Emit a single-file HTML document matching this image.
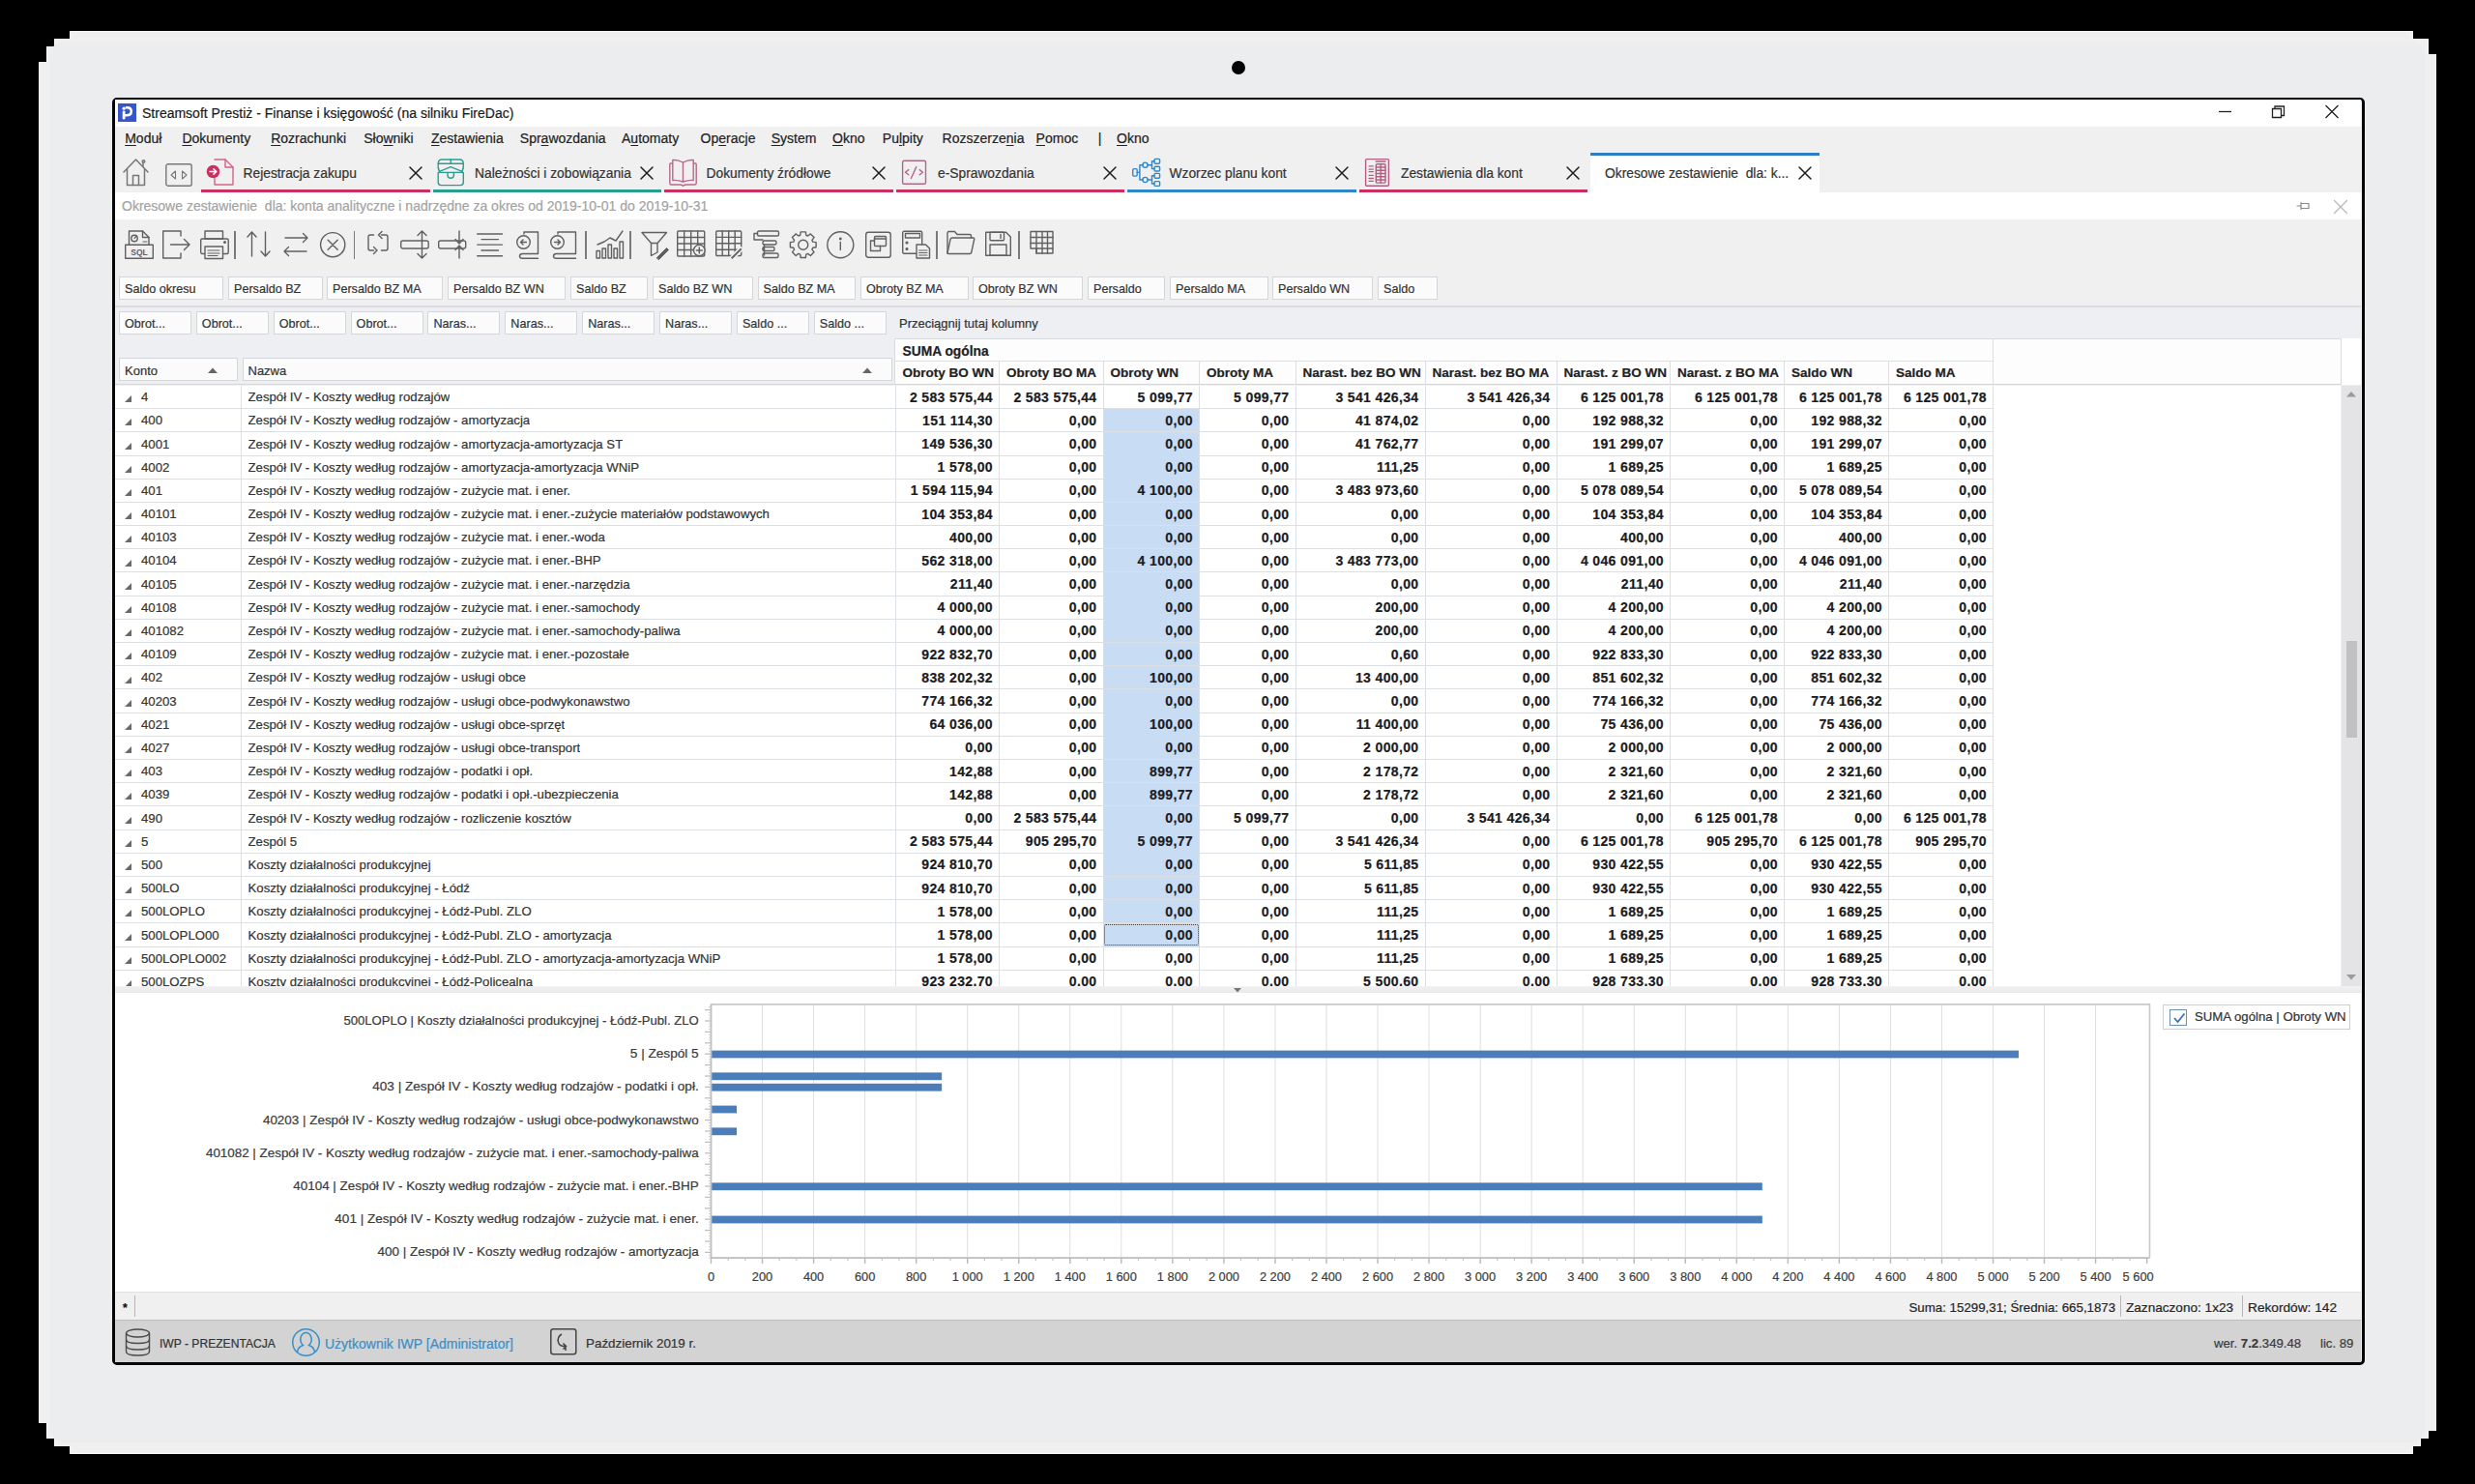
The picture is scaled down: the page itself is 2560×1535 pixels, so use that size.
<!DOCTYPE html>
<html><head><meta charset="utf-8"><style>
*{margin:0;padding:0;box-sizing:border-box}
html,body{width:2560px;height:1535px;overflow:hidden;background:#000}
body{font-family:"Liberation Sans",sans-serif;color:#2b2b2b;position:relative;-webkit-text-stroke:0.2px currentColor}
.a{position:absolute}
.t{position:absolute;white-space:nowrap;line-height:1}
svg{position:absolute;overflow:visible}
.u{text-decoration:underline;text-underline-offset:2px;text-decoration-thickness:1px}
.gb{position:absolute;background:#fbfbfc;border:1px solid #d3d6da;height:24px;font-size:12.6px;color:#333;padding-left:5px;line-height:24px;white-space:nowrap;overflow:hidden}
.row{position:absolute;left:119px;width:1942px;height:24.19px;border-bottom:1px solid #dcdfe4}
.c{position:absolute;top:-0.4px;height:23.6px;line-height:24.6px;white-space:nowrap;overflow:hidden}
.n{font-weight:bold;font-size:14px;letter-spacing:0.36px;text-align:right;color:#1b1b22}
.vl{position:absolute;width:1px;background:#dcdfe4}
.hd{position:absolute;font-weight:bold;font-size:13.5px;color:#222;line-height:24px;white-space:nowrap;padding-left:6px}
</style></head><body>
<div class="a" style="left:72px;top:32px;width:2424px;height:8px;background:#fcfcfc"></div>
<div class="a" style="left:56px;top:40px;width:2456px;height:8px;background:#fcfcfc"></div>
<div class="a" style="left:48px;top:48px;width:2464px;height:8px;background:#fcfcfc"></div>
<div class="a" style="left:48px;top:56px;width:2472px;height:8px;background:#fcfcfc"></div>
<div class="a" style="left:40px;top:64px;width:2480px;height:1408px;background:#fcfcfc"></div>
<div class="a" style="left:48px;top:1472px;width:2472px;height:8px;background:#fcfcfc"></div>
<div class="a" style="left:48px;top:1480px;width:2464px;height:8px;background:#fcfcfc"></div>
<div class="a" style="left:56px;top:1488px;width:2448px;height:8px;background:#fcfcfc"></div>
<div class="a" style="left:72px;top:1496px;width:2424px;height:8px;background:#fcfcfc"></div>
<div class="a" style="left:73px;top:33px;width:2422px;height:7px;background:#f0f0f1"></div>
<div class="a" style="left:57px;top:40px;width:2454px;height:8px;background:#f0f0f1"></div>
<div class="a" style="left:49px;top:48px;width:2462px;height:8px;background:#f0f0f1"></div>
<div class="a" style="left:49px;top:56px;width:2470px;height:8px;background:#f0f0f1"></div>
<div class="a" style="left:41px;top:64px;width:2478px;height:1408px;background:#f0f0f1"></div>
<div class="a" style="left:49px;top:1472px;width:2470px;height:8px;background:#f0f0f1"></div>
<div class="a" style="left:49px;top:1480px;width:2462px;height:8px;background:#f0f0f1"></div>
<div class="a" style="left:57px;top:1488px;width:2446px;height:8px;background:#f0f0f1"></div>
<div class="a" style="left:73px;top:1496px;width:2422px;height:7px;background:#f0f0f1"></div>
<div class="a" style="left:52px;top:43px;width:2456px;height:1449px;background:#ecedef;border-radius:14px"></div>
<div class="a" style="left:1273.8px;top:62.8px;width:14.4px;height:14.4px;background:#000;border-radius:50%"></div>
<div class="a" style="left:116px;top:101px;width:2330px;height:1311px;border:3px solid #050505;border-top-width:2px;border-radius:5px;background:#f0f0f0"></div>
<div class="a" style="left:119px;top:103px;width:2323px;height:28px;background:#fff"></div>
<div class="a" style="left:122px;top:107px;width:19px;height:19px;background:#3657c9"></div>
<svg style="left:122px;top:107px" width="19" height="19"><circle cx="6.1" cy="5.2" r="1.6" fill="#fff"/><path d="M6.1 8.8 V15.2" stroke="#fff" stroke-width="2.8" stroke-linecap="round"/><path d="M8.8 4.3 Q13.7 4 13.8 8.2 Q13.7 12.3 8.8 12.2 H6.5" stroke="#fff" stroke-width="2.6" fill="none" stroke-linecap="round"/></svg>
<div class="t" style="left:147px;top:110px;font-size:14px;color:#1a1a1a">Streamsoft Prestiż - Finanse i księgowość (na silniku FireDac)</div>
<svg style="left:2290px;top:105px" width="150" height="24"><path d="M5 10.5 H18" stroke="#222" stroke-width="1.3"/><path d="M60.5 7.5 h9 v9 h-9 z M63 7.5 v-2.5 h9.5 v9.5 h-2.5" stroke="#222" stroke-width="1.3" fill="none"/><path d="M115.5 4 L128.5 17 M128.5 4 L115.5 17" stroke="#222" stroke-width="1.3"/></svg>
<div class="t" style="left:129.2px;top:136px;font-size:14px;color:#222"><span class="u">M</span>oduł</div>
<div class="t" style="left:188.4px;top:136px;font-size:14px;color:#222"><span class="u">D</span>okumenty</div>
<div class="t" style="left:280.2px;top:136px;font-size:14px;color:#222"><span class="u">R</span>ozrachunki</div>
<div class="t" style="left:376.2px;top:136px;font-size:14px;color:#222">Sło<span class="u">w</span>niki</div>
<div class="t" style="left:446px;top:136px;font-size:14px;color:#222"><span class="u">Z</span>estawienia</div>
<div class="t" style="left:537.8px;top:136px;font-size:14px;color:#222">Spr<span class="u">a</span>wozdania</div>
<div class="t" style="left:643px;top:136px;font-size:14px;color:#222">A<span class="u">u</span>tomaty</div>
<div class="t" style="left:724.6px;top:136px;font-size:14px;color:#222">Op<span class="u">e</span>racje</div>
<div class="t" style="left:797.7px;top:136px;font-size:14px;color:#222"><span class="u">S</span>ystem</div>
<div class="t" style="left:861px;top:136px;font-size:14px;color:#222"><span class="u">O</span>kno</div>
<div class="t" style="left:912.8px;top:136px;font-size:14px;color:#222">Pu<span class="u">l</span>pity</div>
<div class="t" style="left:974.6px;top:136px;font-size:14px;color:#222">Rozszerze<span class="u">n</span>ia</div>
<div class="t" style="left:1071.6px;top:136px;font-size:14px;color:#222"><span class="u">P</span>omoc</div>
<div class="t" style="left:1135.7px;top:136px;font-size:14px;color:#222">|</div>
<div class="t" style="left:1155px;top:136px;font-size:14px;color:#222"><span class="u">O</span>kno</div>
<svg style="left:126px;top:163px" width="30" height="30" viewBox="0 0 30 30"><g fill="none" stroke="#777" stroke-width="1.5" stroke-linecap="round" stroke-linejoin="round"><path d="M2 15 L14.5 2 L27 15"/><path d="M5.5 12 V28.5 H23.5 V12"/><path d="M11.5 28.5 V18.5 H17.5 V28.5"/><path d="M22 5 v4"/><circle cx="22.5" cy="4" r="1.3"/></g></svg>
<svg style="left:171px;top:169px" width="28" height="24" viewBox="0 0 28 24"><g fill="none" stroke="#777" stroke-width="1.4" stroke-linecap="round" stroke-linejoin="round"><rect x="0.8" y="0.8" width="26.4" height="22.4" rx="2"/><path d="M10.5 8 L6 12 L10.5 16 Z M17.5 8 L22 12 L17.5 16 Z" stroke-width="1.1"/></g></svg>
<svg style="left:212.5px;top:164px" width="29" height="29" viewBox="0 0 29 29"><g fill="none" stroke="#d2648a" stroke-width="1.4" stroke-linecap="round" stroke-linejoin="round"><path d="M9 1 H20 L28 9 V27 H9 V20.5"/><path d="M20 1 V9 H28"/><circle cx="7.5" cy="13.5" r="6.8" fill="#c9305f" stroke="none"/><path d="M4 13.5 H10.5 M8 10.8 L10.8 13.5 L8 16.2" stroke="#fff" stroke-width="1.6"/></g></svg>
<div class="t" style="left:251.5px;top:172.5px;font-size:13.8px;color:#333">Rejestracja zakupu</div>
<svg style="left:422.5px;top:172px" width="14" height="14" viewBox="0 0 14 14"><g fill="none" stroke="#1e1e1e" stroke-width="1.5" stroke-linecap="round" stroke-linejoin="round"><path d="M1 1 L13 13 M13 1 L1 13"/></g></svg>
<div class="a" style="left:208.0px;top:196.3px;width:236.5px;height:2.7px;background:#c9305f"></div>
<svg style="left:452.0px;top:164px" width="29" height="29" viewBox="0 0 29 29"><g fill="none" stroke="#2a9d91" stroke-width="1.4" stroke-linecap="round" stroke-linejoin="round"><path d="M2.5 13.4 Q0.6 9.5 1.2 5 Q1.6 1 5 1 H23.5 Q27 1 27.3 5 Q27.8 9.5 26 13.4"/><path d="M1.2 5.2 H27.3"/><path d="M14.2 1 V5.2"/><path d="M2.5 13.4 L14.2 8.6 L26 13.4"/><path d="M1.2 14.4 V24.5 Q1.2 27.6 4.3 27.6 H24.2 Q27.3 27.6 27.3 24.5 V14.4 Z"/><path d="M11 14.4 V17.3 Q11 20.3 14.2 20.3 Q17.4 20.3 17.4 17.3 V14.4"/></g></svg>
<div class="t" style="left:491.0px;top:172.5px;font-size:13.8px;color:#333">Należności i zobowiązania</div>
<svg style="left:662.0px;top:172px" width="14" height="14" viewBox="0 0 14 14"><g fill="none" stroke="#1e1e1e" stroke-width="1.5" stroke-linecap="round" stroke-linejoin="round"><path d="M1 1 L13 13 M13 1 L1 13"/></g></svg>
<div class="a" style="left:447.5px;top:196.3px;width:236.5px;height:2.7px;background:#2a9d91"></div>
<svg style="left:691.5px;top:164px" width="29" height="29" viewBox="0 0 29 29"><g fill="none" stroke="#b9688a" stroke-width="1.4" stroke-linecap="round" stroke-linejoin="round"><path d="M3.5 5 H1.5 Q0.8 5 0.8 6 V25.5 Q0.8 27 2.5 27 H11 Q13 27 14.5 28.3 Q16 27 18 27 H26.5 Q28.2 27 28.2 25.5 V6 Q28.2 5 27.5 5 H25.5"/><path d="M3.8 1.5 Q9 1 14.5 4 Q20 1 25.2 1.5 V22.5 Q20 22 14.5 24 Q9 22 3.8 22.5 Z"/><path d="M14.5 4 V24"/></g></svg>
<div class="t" style="left:730.5px;top:172.5px;font-size:13.8px;color:#333">Dokumenty źródłowe</div>
<svg style="left:901.5px;top:172px" width="14" height="14" viewBox="0 0 14 14"><g fill="none" stroke="#1e1e1e" stroke-width="1.5" stroke-linecap="round" stroke-linejoin="round"><path d="M1 1 L13 13 M13 1 L1 13"/></g></svg>
<div class="a" style="left:687.0px;top:196.3px;width:236.5px;height:2.7px;background:#c9305f"></div>
<svg style="left:931.0px;top:164px" width="29" height="29" viewBox="0 0 29 29"><g fill="none" stroke="#ad6a87" stroke-width="1.4" stroke-linecap="round" stroke-linejoin="round"><rect x="2.6" y="2.3" width="23.9" height="23.9" rx="1.5"/><path d="M8.8 11.6 L5.4 14.2 L8.8 16.8 M20.2 11.6 L23.5 14.2 L20.2 16.8 M16.8 8.6 L11.4 20.5"/></g></svg>
<div class="t" style="left:970.0px;top:172.5px;font-size:13.8px;color:#333">e-Sprawozdania</div>
<svg style="left:1141.0px;top:172px" width="14" height="14" viewBox="0 0 14 14"><g fill="none" stroke="#1e1e1e" stroke-width="1.5" stroke-linecap="round" stroke-linejoin="round"><path d="M1 1 L13 13 M13 1 L1 13"/></g></svg>
<div class="a" style="left:926.5px;top:196.3px;width:236.5px;height:2.7px;background:#c9305f"></div>
<svg style="left:1170.5px;top:164px" width="29" height="29" viewBox="0 0 29 29"><g fill="none" stroke="#2f86c8" stroke-width="1.4" stroke-linecap="round" stroke-linejoin="round"><rect x="0.7" y="10.6" width="4.5" height="7.5" rx="1.3"/><path d="M5.2 14.4 H7.9 M7.9 6.7 V22 M7.9 6.7 H10.9 M7.9 22 H10.9"/><circle cx="13.5" cy="6.7" r="2.6"/><circle cx="13.5" cy="22" r="2.6"/><path d="M16.1 6.7 H20.5 V2.8 H23 M20.5 6.7 V10.6 H23 M16.1 22 H20.5 V17.8 H23 M20.5 22 V26 H23"/><rect x="23" y="0.4" width="5.6" height="4.8" rx="1.2"/><rect x="23" y="8.2" width="5.6" height="4.8" rx="1.2"/><rect x="23" y="15.4" width="5.6" height="4.8" rx="1.2"/><rect x="23" y="23.6" width="5.6" height="4.8" rx="1.2"/></g></svg>
<div class="t" style="left:1209.5px;top:172.5px;font-size:13.8px;color:#333">Wzorzec planu kont</div>
<svg style="left:1380.5px;top:172px" width="14" height="14" viewBox="0 0 14 14"><g fill="none" stroke="#1e1e1e" stroke-width="1.5" stroke-linecap="round" stroke-linejoin="round"><path d="M1 1 L13 13 M13 1 L1 13"/></g></svg>
<div class="a" style="left:1166.0px;top:196.3px;width:236.5px;height:2.7px;background:#2f86c8"></div>
<svg style="left:1410.0px;top:164px" width="29" height="29" viewBox="0 0 29 29"><g fill="none" stroke="#b25d7f" stroke-width="1.4" stroke-linecap="round" stroke-linejoin="round"><rect x="2.6" y="0.6" width="23.8" height="27.6" rx="1"/><path d="M13.3 3 H23" stroke-width="1.6"/><rect x="13.3" y="5.7" width="9.7" height="19.4" rx="1.2"/><path d="M13.3 9 H23 M13.3 12.3 H23 M13.3 15.5 H23 M13.3 18.7 H23 M13.3 22 H23 M18.15 5.7 V25.1"/><path d="M6 7.8 H10.4 M6 11.1 H10.4 M6 13.6 H10.4 M6 17.3 H10.4 M6 20.5 H10.4 M6 23.3 H10.4" stroke-width="1.3"/></g></svg>
<div class="t" style="left:1449.0px;top:172.5px;font-size:13.8px;color:#333">Zestawienia dla kont</div>
<svg style="left:1620.0px;top:172px" width="14" height="14" viewBox="0 0 14 14"><g fill="none" stroke="#1e1e1e" stroke-width="1.5" stroke-linecap="round" stroke-linejoin="round"><path d="M1 1 L13 13 M13 1 L1 13"/></g></svg>
<div class="a" style="left:1405.5px;top:196.3px;width:236.5px;height:2.7px;background:#c9305f"></div>
<div class="a" style="left:1645px;top:157.5px;width:237px;height:42px;background:#fff;border-top:3px solid #2c7fc2"></div>
<div class="t" style="left:1660px;top:172.5px;font-size:13.8px;color:#333">Okresowe zestawienie&nbsp; dla: k...</div>
<svg style="left:1859.5px;top:172px" width="14" height="14" viewBox="0 0 14 14"><g fill="none" stroke="#1e1e1e" stroke-width="1.5" stroke-linecap="round" stroke-linejoin="round"><path d="M1 1 L13 13 M13 1 L1 13"/></g></svg>
<div class="a" style="left:119px;top:199px;width:2323px;height:28px;background:#fff"></div>
<div class="a" style="left:1645px;top:196px;width:237px;height:4px;background:#fff"></div>
<div class="t" style="left:126px;top:206px;font-size:14px;color:#a3a3a3">Okresowe zestawienie&nbsp; dla: konta analityczne i nadrzędne za okres od 2019-10-01 do 2019-10-31</div>
<svg style="left:2375px;top:207px" width="16" height="12" viewBox="0 0 16 12"><g fill="none" stroke="#8a8a8a" stroke-width="1.2" stroke-linecap="round" stroke-linejoin="round"><path d="M1 6 H5 M5 2.5 V9.5 M5 3.5 H13 V8.5 H5"/></g></svg>
<svg style="left:2413px;top:206px" width="16" height="16" viewBox="0 0 16 16"><g fill="none" stroke="#b9b9b9" stroke-width="1.3" stroke-linecap="round" stroke-linejoin="round"><path d="M1.5 1.5 L14.5 14.5 M14.5 1.5 L1.5 14.5"/></g></svg>
<div class="a" style="left:242.3px;top:239px;width:1.5px;height:29px;background:#7a7a7a"></div>
<div class="a" style="left:365.90000000000003px;top:239px;width:1.5px;height:29px;background:#7a7a7a"></div>
<div class="a" style="left:605.0px;top:239px;width:1.5px;height:29px;background:#7a7a7a"></div>
<div class="a" style="left:651.0999999999999px;top:239px;width:1.5px;height:29px;background:#7a7a7a"></div>
<div class="a" style="left:968.0999999999999px;top:239px;width:1.5px;height:29px;background:#7a7a7a"></div>
<div class="a" style="left:1053.0px;top:239px;width:1.5px;height:29px;background:#7a7a7a"></div>
<svg style="left:128.5px;top:238px" width="31" height="31" viewBox="0 0 31 31"><g fill="none" stroke="#606060" stroke-width="1.4" stroke-linecap="round" stroke-linejoin="round"><path d="M4.5 15 V1 H18.5 L25 7.5 V15"/><path d="M18.5 1 V7.5 H25"/><circle cx="10" cy="8.5" r="3.2"/><path d="M10 8.5 L12.5 6 M19 12 h4" stroke-width="1.1"/><rect x="0.7" y="15.2" width="28.6" height="14"/><text x="15" y="26" font-size="8.5" font-family="Liberation Sans" font-weight="bold" text-anchor="middle" fill="#606060" stroke="none">SQL</text></g></svg>
<svg style="left:167.5px;top:238px" width="31" height="31" viewBox="0 0 31 31"><g fill="none" stroke="#606060" stroke-width="1.4" stroke-linecap="round" stroke-linejoin="round"><path d="M19 6 V1 H0.7 V29 H19 V24"/><path d="M8.5 15 H28 M22.5 9.5 L28 15 L22.5 20.5"/></g></svg>
<svg style="left:206.5px;top:238px" width="31" height="31" viewBox="0 0 31 31"><g fill="none" stroke="#606060" stroke-width="1.4" stroke-linecap="round" stroke-linejoin="round"><rect x="5" y="1" width="18.5" height="8"/><rect x="0.7" y="9" width="28.5" height="15.5" rx="1.5"/><rect x="5" y="17" width="18.5" height="12.5" fill="#f0f0f0"/><path d="M8 21 H20 M8 24 H20 M8 26.5 H18" stroke-width="1.2"/><circle cx="25.5" cy="12.5" r="0.8" fill="#606060"/></g></svg>
<svg style="left:254.5px;top:238px" width="31" height="31" viewBox="0 0 31 31"><g fill="none" stroke="#606060" stroke-width="1.4" stroke-linecap="round" stroke-linejoin="round"><path d="M5.5 27 V2 M1 7 L5.5 2 L10 7"/><path d="M19.5 2 V27 M15 22 L19.5 27 L24 22"/></g></svg>
<svg style="left:292.5px;top:238px" width="31" height="31" viewBox="0 0 31 31"><g fill="none" stroke="#606060" stroke-width="1.4" stroke-linecap="round" stroke-linejoin="round"><path d="M2 8 H25 M20.5 3.5 L25 8 L20.5 12.5"/><path d="M24 22 H1 M5.5 17.5 L1 22 L5.5 26.5"/></g></svg>
<svg style="left:331px;top:238px" width="31" height="31" viewBox="0 0 31 31"><g fill="none" stroke="#606060" stroke-width="1.4" stroke-linecap="round" stroke-linejoin="round"><circle cx="13.2" cy="15.2" r="12.6"/><path d="M8.2 10.2 L18.2 20.2 M18.2 10.2 L8.2 20.2"/></g></svg>
<svg style="left:379.5px;top:238px" width="31" height="31" viewBox="0 0 31 31"><g fill="none" stroke="#606060" stroke-width="1.4" stroke-linecap="round" stroke-linejoin="round"><path d="M6.5 5 H3 Q1 5 1 7 V19 Q1 21 3 21 H6.5"/><path d="M14.5 5 H19 Q21 5 21 7 V19 Q21 21 19 21 H14.5"/><path d="M15 1.5 L11.5 5 L15 8.5 M6.5 17.5 L10 21 L6.5 24.5"/></g></svg>
<svg style="left:414px;top:238px" width="31" height="31" viewBox="0 0 31 31"><g fill="none" stroke="#606060" stroke-width="1.4" stroke-linecap="round" stroke-linejoin="round"><rect x="0.7" y="11" width="28.5" height="8" rx="2"/><path d="M22.5 1 V29 M18 5.5 L22.5 1 L27 5.5 M18 24.5 L22.5 29 L27 24.5"/></g></svg>
<svg style="left:453px;top:238px" width="31" height="31" viewBox="0 0 31 31"><g fill="none" stroke="#606060" stroke-width="1.4" stroke-linecap="round" stroke-linejoin="round"><rect x="0.7" y="11" width="28" height="8" rx="2" fill="#f0f0f0"/><path d="M22 1 V13.5 M22 16.5 V29 M18 9.5 L22 14 L26 9.5 M18 20.5 L22 16 L26 20.5"/></g></svg>
<svg style="left:493px;top:238px" width="31" height="31" viewBox="0 0 31 31"><g fill="none" stroke="#606060" stroke-width="1.4" stroke-linecap="round" stroke-linejoin="round"><path d="M0.7 4 H26.5 M5 9.6 H22.5 M0.7 15.1 H26.5 M5 21 H22.5 M0.7 26.8 H26.5"/></g></svg>
<svg style="left:534px;top:238px" width="31" height="31" viewBox="0 0 31 31"><g fill="none" stroke="#606060" stroke-width="1.4" stroke-linecap="round" stroke-linejoin="round"><path d="M8 4 V2 H22.5 V24.5 H6.5 Q3.5 24.5 3.5 27 Q3.5 29.2 6.5 29.2 H22.5"/><circle cx="7.5" cy="12.5" r="6.8" fill="#f0f0f0"/><path d="M10.5 12.5 H4.5 M7 10 L4.5 12.5 L7 15"/></g></svg>
<svg style="left:569px;top:238px" width="31" height="31" viewBox="0 0 31 31"><g fill="none" stroke="#606060" stroke-width="1.4" stroke-linecap="round" stroke-linejoin="round"><path d="M8 4 V2 H26.5 V24.5 H6.5 Q3.5 24.5 3.5 27 Q3.5 29.2 6.5 29.2 H26.5"/><circle cx="7.5" cy="12.5" r="6.8" fill="#f0f0f0"/><path d="M4.5 12.5 H10.5 M8 10 L10.5 12.5 L8 15"/></g></svg>
<svg style="left:615.5px;top:238px" width="31" height="31" viewBox="0 0 31 31"><g fill="none" stroke="#606060" stroke-width="1.4" stroke-linecap="round" stroke-linejoin="round"><rect x="1" y="21.5" width="3.5" height="7.5"/><rect x="7" y="19" width="3.5" height="10"/><rect x="13" y="15" width="3.5" height="14"/><rect x="19" y="19" width="3.5" height="10"/><rect x="25" y="12" width="3.5" height="17"/><path d="M2 15 L9 12 L15 8 L21 11 L28 1"/></g></svg>
<svg style="left:662.5px;top:238px" width="31" height="31" viewBox="0 0 31 31"><g fill="none" stroke="#606060" stroke-width="1.4" stroke-linecap="round" stroke-linejoin="round"><path d="M1 2.5 H26.5 L17 13.5 V23 L10.5 26.5 V13.5 Z M10.5 13.5 H17"/><path d="M16.5 28.5 L26.5 18.5 L28.5 20.5 L18.5 30.5 Z" fill="#606060" stroke-width="1"/></g></svg>
<svg style="left:700px;top:238px" width="31" height="31" viewBox="0 0 31 31"><g fill="none" stroke="#606060" stroke-width="1.4" stroke-linecap="round" stroke-linejoin="round"><rect x="0.7" y="1" width="28" height="26" rx="1"/><path d="M0.7 7.5 H28.7 M0.7 14 H28.7 M0.7 20.5 H28.7 M7.7 1 V27 M14.7 1 V27 M21.7 1 V27"/><circle cx="23.3" cy="21" r="5.8" fill="#f0f0f0"/><path d="M23.3 18 V24 M20.3 21 H26.3"/></g></svg>
<svg style="left:740px;top:238px" width="31" height="31" viewBox="0 0 31 31"><g fill="none" stroke="#606060" stroke-width="1.4" stroke-linecap="round" stroke-linejoin="round"><rect x="0.7" y="1" width="26" height="25.5" rx="1"/><path d="M0.7 7.4 H26.7 M0.7 13.8 H26.7 M0.7 20.2 H26.7 M7.2 1 V26.5 M13.7 1 V26.5 M20.2 1 V26.5"/><path d="M15 28.5 L26 17.5 L28.5 20 L17.5 31 Z" fill="#606060" stroke="#f0f0f0" stroke-width="1.6"/></g></svg>
<svg style="left:778.5px;top:238px" width="31" height="31" viewBox="0 0 31 31"><g fill="none" stroke="#606060" stroke-width="1.4" stroke-linecap="round" stroke-linejoin="round"><rect x="4.5" y="1" width="22" height="5" rx="1.5"/><path d="M4.5 3.5 H1 V10 H10"/><rect x="10" y="11" width="14" height="4" rx="1.5"/><rect x="10" y="17.5" width="12" height="4" rx="1.5"/><rect x="10" y="24" width="16" height="4.5" rx="1.5"/><path d="M11.5 15 V26 M11.5 19.5 H10"/></g></svg>
<svg style="left:815.5px;top:238px" width="31" height="31" viewBox="0 0 31 31"><g fill="none" stroke="#606060" stroke-width="1.4" stroke-linecap="round" stroke-linejoin="round"><path d="M24.70 12.16 L28.10 12.60 L28.10 17.80 L24.70 18.24 L23.93 20.08 L26.02 22.81 L22.36 26.47 L19.63 24.38 L17.79 25.15 L17.35 28.55 L12.15 28.55 L11.71 25.15 L9.87 24.38 L7.14 26.47 L3.48 22.81 L5.57 20.08 L4.80 18.24 L1.40 17.80 L1.40 12.60 L4.80 12.16 L5.57 10.32 L3.48 7.59 L7.14 3.93 L9.87 6.02 L11.71 5.25 L12.15 1.85 L17.35 1.85 L17.79 5.25 L19.63 6.02 L22.36 3.93 L26.02 7.59 L23.93 10.32 Z"/><circle cx="14.75" cy="15.2" r="5"/></g></svg>
<svg style="left:855px;top:238px" width="31" height="31" viewBox="0 0 31 31"><g fill="none" stroke="#606060" stroke-width="1.4" stroke-linecap="round" stroke-linejoin="round"><circle cx="14.3" cy="15.2" r="13.5"/><path d="M14.3 12.5 V20.5"/><circle cx="14.3" cy="9" r="0.7" fill="#606060"/></g></svg>
<svg style="left:895px;top:238px" width="31" height="31" viewBox="0 0 31 31"><g fill="none" stroke="#606060" stroke-width="1.4" stroke-linecap="round" stroke-linejoin="round"><rect x="0.7" y="2.2" width="25.5" height="26" rx="2.5"/><rect x="9.5" y="6.5" width="12" height="10" rx="1"/><path d="M9.5 9 H21.5"/><path d="M9.5 11 H5.5 V21.5 H15.5 V16.5"/></g></svg>
<svg style="left:932.5px;top:238px" width="31" height="31" viewBox="0 0 31 31"><g fill="none" stroke="#606060" stroke-width="1.4" stroke-linecap="round" stroke-linejoin="round"><rect x="0.7" y="1.2" width="20" height="23" rx="1.5"/><rect x="3.5" y="3.5" width="15" height="4.5"/><circle cx="5" cy="13" r="0.9" fill="#606060"/><circle cx="5" cy="19.5" r="0.9" fill="#606060"/><path d="M15 15 H24.5 L28.5 19 V29 H15 Z" fill="#f0f0f0"/><path d="M17.5 21 H26 M17.5 23.5 H26 M17.5 26 H26" stroke-width="1.1"/></g></svg>
<svg style="left:978.5px;top:238px" width="31" height="31" viewBox="0 0 31 31"><g fill="none" stroke="#606060" stroke-width="1.4" stroke-linecap="round" stroke-linejoin="round"><path d="M1 24 V3 Q1 1.5 2.5 1.5 H8.5 L11 4.5 H24 Q25.5 4.5 25.5 6 V8"/><path d="M1 24 L4 9.5 Q4.3 8 6 8 H27.5 Q29 8 28.7 9.5 L25.8 23 Q25.5 24.5 24 24.5 H2.5 Q1 24.5 1 24 Z"/></g></svg>
<svg style="left:1018.5px;top:238px" width="31" height="31" viewBox="0 0 31 31"><g fill="none" stroke="#606060" stroke-width="1.4" stroke-linecap="round" stroke-linejoin="round"><path d="M0.7 2.3 H21.5 L26.3 7 V26.3 H0.7 Z"/><rect x="5" y="2.3" width="14.5" height="8.5" rx="1"/><path d="M16 4.5 V8.5"/><rect x="5" y="15" width="17" height="11.3"/></g></svg>
<svg style="left:1065.3px;top:238px" width="31" height="31" viewBox="0 0 31 31"><g fill="none" stroke="#606060" stroke-width="1.4" stroke-linecap="round" stroke-linejoin="round"><path d="M1 1.5 H24 V24 H7 V19 H1 Z"/><path d="M1 7.5 H24 M1 13.5 H24 M7 19 H24 M7 1.5 V24 M13 1.5 V24 M18.5 1.5 V24"/></g></svg>
<div class="a" style="left:119px;top:317px;width:2323px;height:81px;background:#eeeff2"></div>
<div class="gb" style="left:123px;top:285.5px;width:108px">Saldo okresu</div>
<div class="gb" style="left:236px;top:285.5px;width:98px">Persaldo BZ</div>
<div class="gb" style="left:338px;top:285.5px;width:120px">Persaldo BZ MA</div>
<div class="gb" style="left:463px;top:285.5px;width:122px">Persaldo BZ WN</div>
<div class="gb" style="left:590px;top:285.5px;width:80px">Saldo BZ</div>
<div class="gb" style="left:675px;top:285.5px;width:104px">Saldo BZ WN</div>
<div class="gb" style="left:783.5px;top:285.5px;width:101.5px">Saldo BZ MA</div>
<div class="gb" style="left:890px;top:285.5px;width:111.70000000000005px">Obroty BZ MA</div>
<div class="gb" style="left:1006px;top:285.5px;width:114px">Obroty BZ WN</div>
<div class="gb" style="left:1125px;top:285.5px;width:80px">Persaldo</div>
<div class="gb" style="left:1210px;top:285.5px;width:101.5px">Persaldo MA</div>
<div class="gb" style="left:1316px;top:285.5px;width:104px">Persaldo WN</div>
<div class="gb" style="left:1425px;top:285.5px;width:62px">Saldo</div>
<div class="a" style="left:119px;top:316px;width:2323px;height:1.5px;background:#d9dbdf"></div>
<div class="gb" style="left:123.00px;top:322px;width:75px">Obrot...</div>
<div class="gb" style="left:202.87px;top:322px;width:75px">Obrot...</div>
<div class="gb" style="left:282.74px;top:322px;width:75px">Obrot...</div>
<div class="gb" style="left:362.61px;top:322px;width:75px">Obrot...</div>
<div class="gb" style="left:442.48px;top:322px;width:75px">Naras...</div>
<div class="gb" style="left:522.35px;top:322px;width:75px">Naras...</div>
<div class="gb" style="left:602.22px;top:322px;width:75px">Naras...</div>
<div class="gb" style="left:682.09px;top:322px;width:75px">Naras...</div>
<div class="gb" style="left:761.96px;top:322px;width:75px">Saldo ...</div>
<div class="gb" style="left:841.83px;top:322px;width:75px">Saldo ...</div>
<div class="t" style="left:930px;top:328px;font-size:13px;color:#333">Przeciągnij tutaj kolumny</div>
<div class="gb" style="left:123px;top:370px;width:123px;font-size:13px;line-height:26px">Konto</div>
<svg style="left:215px;top:380px" width="10" height="6"><path d="M0 6 L5 0.5 L10 6 Z" fill="#666"/></svg>
<div class="gb" style="left:250.5px;top:370px;width:672px;font-size:13px;line-height:26px">Nazwa</div>
<svg style="left:891.5px;top:379.5px" width="10" height="6"><path d="M0 6 L5 0.5 L10 6 Z" fill="#666"/></svg>
<div class="a" style="left:925px;top:349.5px;width:1497px;height:48.5px;background:#fdfdfe;border-top:1px solid #d8dbe0;border-left:1px solid #d8dbe0;border-right:1px solid #d8dbe0"></div>
<div class="a" style="left:2422px;top:350px;width:20px;height:48px;background:#fff"></div>
<div class="hd" style="left:927.5px;top:351.5px;font-size:13.8px">SUMA ogólna</div>
<div class="a" style="left:925px;top:373.3px;width:1136px;height:1px;background:#dcdfe4"></div>
<div class="hd" style="left:927.5px;top:374.3px">Obroty BO WN</div>
<div class="vl" style="left:1033px;top:373.5px;height:24.5px"></div>
<div class="hd" style="left:1035px;top:374.3px">Obroty BO MA</div>
<div class="vl" style="left:1140.5px;top:373.5px;height:24.5px"></div>
<div class="hd" style="left:1142.5px;top:374.3px">Obroty WN</div>
<div class="vl" style="left:1240px;top:373.5px;height:24.5px"></div>
<div class="hd" style="left:1242px;top:374.3px">Obroty MA</div>
<div class="vl" style="left:1339.5px;top:373.5px;height:24.5px"></div>
<div class="hd" style="left:1341.5px;top:374.3px">Narast. bez BO WN</div>
<div class="vl" style="left:1473.5px;top:373.5px;height:24.5px"></div>
<div class="hd" style="left:1475.5px;top:374.3px">Narast. bez BO MA</div>
<div class="vl" style="left:1609.5px;top:373.5px;height:24.5px"></div>
<div class="hd" style="left:1611.5px;top:374.3px">Narast. z BO WN</div>
<div class="vl" style="left:1727px;top:373.5px;height:24.5px"></div>
<div class="hd" style="left:1729px;top:374.3px">Narast. z BO MA</div>
<div class="vl" style="left:1845px;top:373.5px;height:24.5px"></div>
<div class="hd" style="left:1847px;top:374.3px">Saldo WN</div>
<div class="vl" style="left:1953px;top:373.5px;height:24.5px"></div>
<div class="hd" style="left:1955px;top:374.3px">Saldo MA</div>
<div class="vl" style="left:2061px;top:373.5px;height:24.5px"></div>
<div class="vl" style="left:2061px;top:349.5px;height:48.5px"></div>
<div class="a" style="left:119px;top:397.3px;width:2302px;height:1.2px;background:#d3d6db"></div>
<div class="a" style="left:119px;top:398.5px;width:2302px;height:621.5px;background:#fff;overflow:hidden">
<div class="row" style="left:0;top:0.45px"><svg style="left:10.2px;top:10.3px" width="7" height="7"><path d="M7 0 L7 7 L0 7 Z" fill="#6a6a6a"/></svg><div class="c" style="left:27px;top:0.2px;font-size:13.2px;color:#333">4</div><div class="c" style="left:137.5px;top:0.2px;font-size:13.2px;color:#333">Zespół IV - Koszty według rodzajów</div><div class="c n" style="left:807.5px;width:106.5px;padding-right:6px;">2 583 575,44</div><div class="c n" style="left:915px;width:106.5px;padding-right:6px;">2 583 575,44</div><div class="c n" style="left:1022.5px;width:98.5px;padding-right:6px;">5 099,77</div><div class="c n" style="left:1122px;width:98.5px;padding-right:6px;">5 099,77</div><div class="c n" style="left:1221.5px;width:133.0px;padding-right:6px;">3 541 426,34</div><div class="c n" style="left:1355.5px;width:135.0px;padding-right:6px;">3 541 426,34</div><div class="c n" style="left:1491.5px;width:116.5px;padding-right:6px;">6 125 001,78</div><div class="c n" style="left:1609px;width:117px;padding-right:6px;">6 125 001,78</div><div class="c n" style="left:1727px;width:107px;padding-right:6px;">6 125 001,78</div><div class="c n" style="left:1835px;width:107px;padding-right:6px;">6 125 001,78</div></div>
<div class="row" style="left:0;top:24.64px"><svg style="left:10.2px;top:10.3px" width="7" height="7"><path d="M7 0 L7 7 L0 7 Z" fill="#6a6a6a"/></svg><div class="c" style="left:27px;top:0.2px;font-size:13.2px;color:#333">400</div><div class="c" style="left:137.5px;top:0.2px;font-size:13.2px;color:#333">Zespół IV - Koszty według rodzajów - amortyzacja</div><div class="c n" style="left:807.5px;width:106.5px;padding-right:6px;">151 114,30</div><div class="c n" style="left:915px;width:106.5px;padding-right:6px;">0,00</div><div class="c n" style="left:1022.5px;width:98.5px;padding-right:6px;background:#c8ddf3;">0,00</div><div class="c n" style="left:1122px;width:98.5px;padding-right:6px;">0,00</div><div class="c n" style="left:1221.5px;width:133.0px;padding-right:6px;">41 874,02</div><div class="c n" style="left:1355.5px;width:135.0px;padding-right:6px;">0,00</div><div class="c n" style="left:1491.5px;width:116.5px;padding-right:6px;">192 988,32</div><div class="c n" style="left:1609px;width:117px;padding-right:6px;">0,00</div><div class="c n" style="left:1727px;width:107px;padding-right:6px;">192 988,32</div><div class="c n" style="left:1835px;width:107px;padding-right:6px;">0,00</div></div>
<div class="row" style="left:0;top:48.83px"><svg style="left:10.2px;top:10.3px" width="7" height="7"><path d="M7 0 L7 7 L0 7 Z" fill="#6a6a6a"/></svg><div class="c" style="left:27px;top:0.2px;font-size:13.2px;color:#333">4001</div><div class="c" style="left:137.5px;top:0.2px;font-size:13.2px;color:#333">Zespół IV - Koszty według rodzajów - amortyzacja-amortyzacja ST</div><div class="c n" style="left:807.5px;width:106.5px;padding-right:6px;">149 536,30</div><div class="c n" style="left:915px;width:106.5px;padding-right:6px;">0,00</div><div class="c n" style="left:1022.5px;width:98.5px;padding-right:6px;background:#c8ddf3;">0,00</div><div class="c n" style="left:1122px;width:98.5px;padding-right:6px;">0,00</div><div class="c n" style="left:1221.5px;width:133.0px;padding-right:6px;">41 762,77</div><div class="c n" style="left:1355.5px;width:135.0px;padding-right:6px;">0,00</div><div class="c n" style="left:1491.5px;width:116.5px;padding-right:6px;">191 299,07</div><div class="c n" style="left:1609px;width:117px;padding-right:6px;">0,00</div><div class="c n" style="left:1727px;width:107px;padding-right:6px;">191 299,07</div><div class="c n" style="left:1835px;width:107px;padding-right:6px;">0,00</div></div>
<div class="row" style="left:0;top:73.02px"><svg style="left:10.2px;top:10.3px" width="7" height="7"><path d="M7 0 L7 7 L0 7 Z" fill="#6a6a6a"/></svg><div class="c" style="left:27px;top:0.2px;font-size:13.2px;color:#333">4002</div><div class="c" style="left:137.5px;top:0.2px;font-size:13.2px;color:#333">Zespół IV - Koszty według rodzajów - amortyzacja-amortyzacja WNiP</div><div class="c n" style="left:807.5px;width:106.5px;padding-right:6px;">1 578,00</div><div class="c n" style="left:915px;width:106.5px;padding-right:6px;">0,00</div><div class="c n" style="left:1022.5px;width:98.5px;padding-right:6px;background:#c8ddf3;">0,00</div><div class="c n" style="left:1122px;width:98.5px;padding-right:6px;">0,00</div><div class="c n" style="left:1221.5px;width:133.0px;padding-right:6px;">111,25</div><div class="c n" style="left:1355.5px;width:135.0px;padding-right:6px;">0,00</div><div class="c n" style="left:1491.5px;width:116.5px;padding-right:6px;">1 689,25</div><div class="c n" style="left:1609px;width:117px;padding-right:6px;">0,00</div><div class="c n" style="left:1727px;width:107px;padding-right:6px;">1 689,25</div><div class="c n" style="left:1835px;width:107px;padding-right:6px;">0,00</div></div>
<div class="row" style="left:0;top:97.21px"><svg style="left:10.2px;top:10.3px" width="7" height="7"><path d="M7 0 L7 7 L0 7 Z" fill="#6a6a6a"/></svg><div class="c" style="left:27px;top:0.2px;font-size:13.2px;color:#333">401</div><div class="c" style="left:137.5px;top:0.2px;font-size:13.2px;color:#333">Zespół IV - Koszty według rodzajów - zużycie mat. i ener.</div><div class="c n" style="left:807.5px;width:106.5px;padding-right:6px;">1 594 115,94</div><div class="c n" style="left:915px;width:106.5px;padding-right:6px;">0,00</div><div class="c n" style="left:1022.5px;width:98.5px;padding-right:6px;background:#c8ddf3;">4 100,00</div><div class="c n" style="left:1122px;width:98.5px;padding-right:6px;">0,00</div><div class="c n" style="left:1221.5px;width:133.0px;padding-right:6px;">3 483 973,60</div><div class="c n" style="left:1355.5px;width:135.0px;padding-right:6px;">0,00</div><div class="c n" style="left:1491.5px;width:116.5px;padding-right:6px;">5 078 089,54</div><div class="c n" style="left:1609px;width:117px;padding-right:6px;">0,00</div><div class="c n" style="left:1727px;width:107px;padding-right:6px;">5 078 089,54</div><div class="c n" style="left:1835px;width:107px;padding-right:6px;">0,00</div></div>
<div class="row" style="left:0;top:121.40px"><svg style="left:10.2px;top:10.3px" width="7" height="7"><path d="M7 0 L7 7 L0 7 Z" fill="#6a6a6a"/></svg><div class="c" style="left:27px;top:0.2px;font-size:13.2px;color:#333">40101</div><div class="c" style="left:137.5px;top:0.2px;font-size:13.2px;color:#333">Zespół IV - Koszty według rodzajów - zużycie mat. i ener.-zużycie materiałów podstawowych</div><div class="c n" style="left:807.5px;width:106.5px;padding-right:6px;">104 353,84</div><div class="c n" style="left:915px;width:106.5px;padding-right:6px;">0,00</div><div class="c n" style="left:1022.5px;width:98.5px;padding-right:6px;background:#c8ddf3;">0,00</div><div class="c n" style="left:1122px;width:98.5px;padding-right:6px;">0,00</div><div class="c n" style="left:1221.5px;width:133.0px;padding-right:6px;">0,00</div><div class="c n" style="left:1355.5px;width:135.0px;padding-right:6px;">0,00</div><div class="c n" style="left:1491.5px;width:116.5px;padding-right:6px;">104 353,84</div><div class="c n" style="left:1609px;width:117px;padding-right:6px;">0,00</div><div class="c n" style="left:1727px;width:107px;padding-right:6px;">104 353,84</div><div class="c n" style="left:1835px;width:107px;padding-right:6px;">0,00</div></div>
<div class="row" style="left:0;top:145.59px"><svg style="left:10.2px;top:10.3px" width="7" height="7"><path d="M7 0 L7 7 L0 7 Z" fill="#6a6a6a"/></svg><div class="c" style="left:27px;top:0.2px;font-size:13.2px;color:#333">40103</div><div class="c" style="left:137.5px;top:0.2px;font-size:13.2px;color:#333">Zespół IV - Koszty według rodzajów - zużycie mat. i ener.-woda</div><div class="c n" style="left:807.5px;width:106.5px;padding-right:6px;">400,00</div><div class="c n" style="left:915px;width:106.5px;padding-right:6px;">0,00</div><div class="c n" style="left:1022.5px;width:98.5px;padding-right:6px;background:#c8ddf3;">0,00</div><div class="c n" style="left:1122px;width:98.5px;padding-right:6px;">0,00</div><div class="c n" style="left:1221.5px;width:133.0px;padding-right:6px;">0,00</div><div class="c n" style="left:1355.5px;width:135.0px;padding-right:6px;">0,00</div><div class="c n" style="left:1491.5px;width:116.5px;padding-right:6px;">400,00</div><div class="c n" style="left:1609px;width:117px;padding-right:6px;">0,00</div><div class="c n" style="left:1727px;width:107px;padding-right:6px;">400,00</div><div class="c n" style="left:1835px;width:107px;padding-right:6px;">0,00</div></div>
<div class="row" style="left:0;top:169.78px"><svg style="left:10.2px;top:10.3px" width="7" height="7"><path d="M7 0 L7 7 L0 7 Z" fill="#6a6a6a"/></svg><div class="c" style="left:27px;top:0.2px;font-size:13.2px;color:#333">40104</div><div class="c" style="left:137.5px;top:0.2px;font-size:13.2px;color:#333">Zespół IV - Koszty według rodzajów - zużycie mat. i ener.-BHP</div><div class="c n" style="left:807.5px;width:106.5px;padding-right:6px;">562 318,00</div><div class="c n" style="left:915px;width:106.5px;padding-right:6px;">0,00</div><div class="c n" style="left:1022.5px;width:98.5px;padding-right:6px;background:#c8ddf3;">4 100,00</div><div class="c n" style="left:1122px;width:98.5px;padding-right:6px;">0,00</div><div class="c n" style="left:1221.5px;width:133.0px;padding-right:6px;">3 483 773,00</div><div class="c n" style="left:1355.5px;width:135.0px;padding-right:6px;">0,00</div><div class="c n" style="left:1491.5px;width:116.5px;padding-right:6px;">4 046 091,00</div><div class="c n" style="left:1609px;width:117px;padding-right:6px;">0,00</div><div class="c n" style="left:1727px;width:107px;padding-right:6px;">4 046 091,00</div><div class="c n" style="left:1835px;width:107px;padding-right:6px;">0,00</div></div>
<div class="row" style="left:0;top:193.97px"><svg style="left:10.2px;top:10.3px" width="7" height="7"><path d="M7 0 L7 7 L0 7 Z" fill="#6a6a6a"/></svg><div class="c" style="left:27px;top:0.2px;font-size:13.2px;color:#333">40105</div><div class="c" style="left:137.5px;top:0.2px;font-size:13.2px;color:#333">Zespół IV - Koszty według rodzajów - zużycie mat. i ener.-narzędzia</div><div class="c n" style="left:807.5px;width:106.5px;padding-right:6px;">211,40</div><div class="c n" style="left:915px;width:106.5px;padding-right:6px;">0,00</div><div class="c n" style="left:1022.5px;width:98.5px;padding-right:6px;background:#c8ddf3;">0,00</div><div class="c n" style="left:1122px;width:98.5px;padding-right:6px;">0,00</div><div class="c n" style="left:1221.5px;width:133.0px;padding-right:6px;">0,00</div><div class="c n" style="left:1355.5px;width:135.0px;padding-right:6px;">0,00</div><div class="c n" style="left:1491.5px;width:116.5px;padding-right:6px;">211,40</div><div class="c n" style="left:1609px;width:117px;padding-right:6px;">0,00</div><div class="c n" style="left:1727px;width:107px;padding-right:6px;">211,40</div><div class="c n" style="left:1835px;width:107px;padding-right:6px;">0,00</div></div>
<div class="row" style="left:0;top:218.16px"><svg style="left:10.2px;top:10.3px" width="7" height="7"><path d="M7 0 L7 7 L0 7 Z" fill="#6a6a6a"/></svg><div class="c" style="left:27px;top:0.2px;font-size:13.2px;color:#333">40108</div><div class="c" style="left:137.5px;top:0.2px;font-size:13.2px;color:#333">Zespół IV - Koszty według rodzajów - zużycie mat. i ener.-samochody</div><div class="c n" style="left:807.5px;width:106.5px;padding-right:6px;">4 000,00</div><div class="c n" style="left:915px;width:106.5px;padding-right:6px;">0,00</div><div class="c n" style="left:1022.5px;width:98.5px;padding-right:6px;background:#c8ddf3;">0,00</div><div class="c n" style="left:1122px;width:98.5px;padding-right:6px;">0,00</div><div class="c n" style="left:1221.5px;width:133.0px;padding-right:6px;">200,00</div><div class="c n" style="left:1355.5px;width:135.0px;padding-right:6px;">0,00</div><div class="c n" style="left:1491.5px;width:116.5px;padding-right:6px;">4 200,00</div><div class="c n" style="left:1609px;width:117px;padding-right:6px;">0,00</div><div class="c n" style="left:1727px;width:107px;padding-right:6px;">4 200,00</div><div class="c n" style="left:1835px;width:107px;padding-right:6px;">0,00</div></div>
<div class="row" style="left:0;top:242.35px"><svg style="left:10.2px;top:10.3px" width="7" height="7"><path d="M7 0 L7 7 L0 7 Z" fill="#6a6a6a"/></svg><div class="c" style="left:27px;top:0.2px;font-size:13.2px;color:#333">401082</div><div class="c" style="left:137.5px;top:0.2px;font-size:13.2px;color:#333">Zespół IV - Koszty według rodzajów - zużycie mat. i ener.-samochody-paliwa</div><div class="c n" style="left:807.5px;width:106.5px;padding-right:6px;">4 000,00</div><div class="c n" style="left:915px;width:106.5px;padding-right:6px;">0,00</div><div class="c n" style="left:1022.5px;width:98.5px;padding-right:6px;background:#c8ddf3;">0,00</div><div class="c n" style="left:1122px;width:98.5px;padding-right:6px;">0,00</div><div class="c n" style="left:1221.5px;width:133.0px;padding-right:6px;">200,00</div><div class="c n" style="left:1355.5px;width:135.0px;padding-right:6px;">0,00</div><div class="c n" style="left:1491.5px;width:116.5px;padding-right:6px;">4 200,00</div><div class="c n" style="left:1609px;width:117px;padding-right:6px;">0,00</div><div class="c n" style="left:1727px;width:107px;padding-right:6px;">4 200,00</div><div class="c n" style="left:1835px;width:107px;padding-right:6px;">0,00</div></div>
<div class="row" style="left:0;top:266.54px"><svg style="left:10.2px;top:10.3px" width="7" height="7"><path d="M7 0 L7 7 L0 7 Z" fill="#6a6a6a"/></svg><div class="c" style="left:27px;top:0.2px;font-size:13.2px;color:#333">40109</div><div class="c" style="left:137.5px;top:0.2px;font-size:13.2px;color:#333">Zespół IV - Koszty według rodzajów - zużycie mat. i ener.-pozostałe</div><div class="c n" style="left:807.5px;width:106.5px;padding-right:6px;">922 832,70</div><div class="c n" style="left:915px;width:106.5px;padding-right:6px;">0,00</div><div class="c n" style="left:1022.5px;width:98.5px;padding-right:6px;background:#c8ddf3;">0,00</div><div class="c n" style="left:1122px;width:98.5px;padding-right:6px;">0,00</div><div class="c n" style="left:1221.5px;width:133.0px;padding-right:6px;">0,60</div><div class="c n" style="left:1355.5px;width:135.0px;padding-right:6px;">0,00</div><div class="c n" style="left:1491.5px;width:116.5px;padding-right:6px;">922 833,30</div><div class="c n" style="left:1609px;width:117px;padding-right:6px;">0,00</div><div class="c n" style="left:1727px;width:107px;padding-right:6px;">922 833,30</div><div class="c n" style="left:1835px;width:107px;padding-right:6px;">0,00</div></div>
<div class="row" style="left:0;top:290.73px"><svg style="left:10.2px;top:10.3px" width="7" height="7"><path d="M7 0 L7 7 L0 7 Z" fill="#6a6a6a"/></svg><div class="c" style="left:27px;top:0.2px;font-size:13.2px;color:#333">402</div><div class="c" style="left:137.5px;top:0.2px;font-size:13.2px;color:#333">Zespół IV - Koszty według rodzajów - usługi obce</div><div class="c n" style="left:807.5px;width:106.5px;padding-right:6px;">838 202,32</div><div class="c n" style="left:915px;width:106.5px;padding-right:6px;">0,00</div><div class="c n" style="left:1022.5px;width:98.5px;padding-right:6px;background:#c8ddf3;">100,00</div><div class="c n" style="left:1122px;width:98.5px;padding-right:6px;">0,00</div><div class="c n" style="left:1221.5px;width:133.0px;padding-right:6px;">13 400,00</div><div class="c n" style="left:1355.5px;width:135.0px;padding-right:6px;">0,00</div><div class="c n" style="left:1491.5px;width:116.5px;padding-right:6px;">851 602,32</div><div class="c n" style="left:1609px;width:117px;padding-right:6px;">0,00</div><div class="c n" style="left:1727px;width:107px;padding-right:6px;">851 602,32</div><div class="c n" style="left:1835px;width:107px;padding-right:6px;">0,00</div></div>
<div class="row" style="left:0;top:314.92px"><svg style="left:10.2px;top:10.3px" width="7" height="7"><path d="M7 0 L7 7 L0 7 Z" fill="#6a6a6a"/></svg><div class="c" style="left:27px;top:0.2px;font-size:13.2px;color:#333">40203</div><div class="c" style="left:137.5px;top:0.2px;font-size:13.2px;color:#333">Zespół IV - Koszty według rodzajów - usługi obce-podwykonawstwo</div><div class="c n" style="left:807.5px;width:106.5px;padding-right:6px;">774 166,32</div><div class="c n" style="left:915px;width:106.5px;padding-right:6px;">0,00</div><div class="c n" style="left:1022.5px;width:98.5px;padding-right:6px;background:#c8ddf3;">0,00</div><div class="c n" style="left:1122px;width:98.5px;padding-right:6px;">0,00</div><div class="c n" style="left:1221.5px;width:133.0px;padding-right:6px;">0,00</div><div class="c n" style="left:1355.5px;width:135.0px;padding-right:6px;">0,00</div><div class="c n" style="left:1491.5px;width:116.5px;padding-right:6px;">774 166,32</div><div class="c n" style="left:1609px;width:117px;padding-right:6px;">0,00</div><div class="c n" style="left:1727px;width:107px;padding-right:6px;">774 166,32</div><div class="c n" style="left:1835px;width:107px;padding-right:6px;">0,00</div></div>
<div class="row" style="left:0;top:339.11px"><svg style="left:10.2px;top:10.3px" width="7" height="7"><path d="M7 0 L7 7 L0 7 Z" fill="#6a6a6a"/></svg><div class="c" style="left:27px;top:0.2px;font-size:13.2px;color:#333">4021</div><div class="c" style="left:137.5px;top:0.2px;font-size:13.2px;color:#333">Zespół IV - Koszty według rodzajów - usługi obce-sprzęt</div><div class="c n" style="left:807.5px;width:106.5px;padding-right:6px;">64 036,00</div><div class="c n" style="left:915px;width:106.5px;padding-right:6px;">0,00</div><div class="c n" style="left:1022.5px;width:98.5px;padding-right:6px;background:#c8ddf3;">100,00</div><div class="c n" style="left:1122px;width:98.5px;padding-right:6px;">0,00</div><div class="c n" style="left:1221.5px;width:133.0px;padding-right:6px;">11 400,00</div><div class="c n" style="left:1355.5px;width:135.0px;padding-right:6px;">0,00</div><div class="c n" style="left:1491.5px;width:116.5px;padding-right:6px;">75 436,00</div><div class="c n" style="left:1609px;width:117px;padding-right:6px;">0,00</div><div class="c n" style="left:1727px;width:107px;padding-right:6px;">75 436,00</div><div class="c n" style="left:1835px;width:107px;padding-right:6px;">0,00</div></div>
<div class="row" style="left:0;top:363.30px"><svg style="left:10.2px;top:10.3px" width="7" height="7"><path d="M7 0 L7 7 L0 7 Z" fill="#6a6a6a"/></svg><div class="c" style="left:27px;top:0.2px;font-size:13.2px;color:#333">4027</div><div class="c" style="left:137.5px;top:0.2px;font-size:13.2px;color:#333">Zespół IV - Koszty według rodzajów - usługi obce-transport</div><div class="c n" style="left:807.5px;width:106.5px;padding-right:6px;">0,00</div><div class="c n" style="left:915px;width:106.5px;padding-right:6px;">0,00</div><div class="c n" style="left:1022.5px;width:98.5px;padding-right:6px;background:#c8ddf3;">0,00</div><div class="c n" style="left:1122px;width:98.5px;padding-right:6px;">0,00</div><div class="c n" style="left:1221.5px;width:133.0px;padding-right:6px;">2 000,00</div><div class="c n" style="left:1355.5px;width:135.0px;padding-right:6px;">0,00</div><div class="c n" style="left:1491.5px;width:116.5px;padding-right:6px;">2 000,00</div><div class="c n" style="left:1609px;width:117px;padding-right:6px;">0,00</div><div class="c n" style="left:1727px;width:107px;padding-right:6px;">2 000,00</div><div class="c n" style="left:1835px;width:107px;padding-right:6px;">0,00</div></div>
<div class="row" style="left:0;top:387.49px"><svg style="left:10.2px;top:10.3px" width="7" height="7"><path d="M7 0 L7 7 L0 7 Z" fill="#6a6a6a"/></svg><div class="c" style="left:27px;top:0.2px;font-size:13.2px;color:#333">403</div><div class="c" style="left:137.5px;top:0.2px;font-size:13.2px;color:#333">Zespół IV - Koszty według rodzajów - podatki i opł.</div><div class="c n" style="left:807.5px;width:106.5px;padding-right:6px;">142,88</div><div class="c n" style="left:915px;width:106.5px;padding-right:6px;">0,00</div><div class="c n" style="left:1022.5px;width:98.5px;padding-right:6px;background:#c8ddf3;">899,77</div><div class="c n" style="left:1122px;width:98.5px;padding-right:6px;">0,00</div><div class="c n" style="left:1221.5px;width:133.0px;padding-right:6px;">2 178,72</div><div class="c n" style="left:1355.5px;width:135.0px;padding-right:6px;">0,00</div><div class="c n" style="left:1491.5px;width:116.5px;padding-right:6px;">2 321,60</div><div class="c n" style="left:1609px;width:117px;padding-right:6px;">0,00</div><div class="c n" style="left:1727px;width:107px;padding-right:6px;">2 321,60</div><div class="c n" style="left:1835px;width:107px;padding-right:6px;">0,00</div></div>
<div class="row" style="left:0;top:411.68px"><svg style="left:10.2px;top:10.3px" width="7" height="7"><path d="M7 0 L7 7 L0 7 Z" fill="#6a6a6a"/></svg><div class="c" style="left:27px;top:0.2px;font-size:13.2px;color:#333">4039</div><div class="c" style="left:137.5px;top:0.2px;font-size:13.2px;color:#333">Zespół IV - Koszty według rodzajów - podatki i opł.-ubezpieczenia</div><div class="c n" style="left:807.5px;width:106.5px;padding-right:6px;">142,88</div><div class="c n" style="left:915px;width:106.5px;padding-right:6px;">0,00</div><div class="c n" style="left:1022.5px;width:98.5px;padding-right:6px;background:#c8ddf3;">899,77</div><div class="c n" style="left:1122px;width:98.5px;padding-right:6px;">0,00</div><div class="c n" style="left:1221.5px;width:133.0px;padding-right:6px;">2 178,72</div><div class="c n" style="left:1355.5px;width:135.0px;padding-right:6px;">0,00</div><div class="c n" style="left:1491.5px;width:116.5px;padding-right:6px;">2 321,60</div><div class="c n" style="left:1609px;width:117px;padding-right:6px;">0,00</div><div class="c n" style="left:1727px;width:107px;padding-right:6px;">2 321,60</div><div class="c n" style="left:1835px;width:107px;padding-right:6px;">0,00</div></div>
<div class="row" style="left:0;top:435.87px"><svg style="left:10.2px;top:10.3px" width="7" height="7"><path d="M7 0 L7 7 L0 7 Z" fill="#6a6a6a"/></svg><div class="c" style="left:27px;top:0.2px;font-size:13.2px;color:#333">490</div><div class="c" style="left:137.5px;top:0.2px;font-size:13.2px;color:#333">Zespół IV - Koszty według rodzajów - rozliczenie kosztów</div><div class="c n" style="left:807.5px;width:106.5px;padding-right:6px;">0,00</div><div class="c n" style="left:915px;width:106.5px;padding-right:6px;">2 583 575,44</div><div class="c n" style="left:1022.5px;width:98.5px;padding-right:6px;background:#c8ddf3;">0,00</div><div class="c n" style="left:1122px;width:98.5px;padding-right:6px;">5 099,77</div><div class="c n" style="left:1221.5px;width:133.0px;padding-right:6px;">0,00</div><div class="c n" style="left:1355.5px;width:135.0px;padding-right:6px;">3 541 426,34</div><div class="c n" style="left:1491.5px;width:116.5px;padding-right:6px;">0,00</div><div class="c n" style="left:1609px;width:117px;padding-right:6px;">6 125 001,78</div><div class="c n" style="left:1727px;width:107px;padding-right:6px;">0,00</div><div class="c n" style="left:1835px;width:107px;padding-right:6px;">6 125 001,78</div></div>
<div class="row" style="left:0;top:460.06px"><svg style="left:10.2px;top:10.3px" width="7" height="7"><path d="M7 0 L7 7 L0 7 Z" fill="#6a6a6a"/></svg><div class="c" style="left:27px;top:0.2px;font-size:13.2px;color:#333">5</div><div class="c" style="left:137.5px;top:0.2px;font-size:13.2px;color:#333">Zespól 5</div><div class="c n" style="left:807.5px;width:106.5px;padding-right:6px;">2 583 575,44</div><div class="c n" style="left:915px;width:106.5px;padding-right:6px;">905 295,70</div><div class="c n" style="left:1022.5px;width:98.5px;padding-right:6px;background:#c8ddf3;">5 099,77</div><div class="c n" style="left:1122px;width:98.5px;padding-right:6px;">0,00</div><div class="c n" style="left:1221.5px;width:133.0px;padding-right:6px;">3 541 426,34</div><div class="c n" style="left:1355.5px;width:135.0px;padding-right:6px;">0,00</div><div class="c n" style="left:1491.5px;width:116.5px;padding-right:6px;">6 125 001,78</div><div class="c n" style="left:1609px;width:117px;padding-right:6px;">905 295,70</div><div class="c n" style="left:1727px;width:107px;padding-right:6px;">6 125 001,78</div><div class="c n" style="left:1835px;width:107px;padding-right:6px;">905 295,70</div></div>
<div class="row" style="left:0;top:484.25px"><svg style="left:10.2px;top:10.3px" width="7" height="7"><path d="M7 0 L7 7 L0 7 Z" fill="#6a6a6a"/></svg><div class="c" style="left:27px;top:0.2px;font-size:13.2px;color:#333">500</div><div class="c" style="left:137.5px;top:0.2px;font-size:13.2px;color:#333">Koszty działalności produkcyjnej</div><div class="c n" style="left:807.5px;width:106.5px;padding-right:6px;">924 810,70</div><div class="c n" style="left:915px;width:106.5px;padding-right:6px;">0,00</div><div class="c n" style="left:1022.5px;width:98.5px;padding-right:6px;background:#c8ddf3;">0,00</div><div class="c n" style="left:1122px;width:98.5px;padding-right:6px;">0,00</div><div class="c n" style="left:1221.5px;width:133.0px;padding-right:6px;">5 611,85</div><div class="c n" style="left:1355.5px;width:135.0px;padding-right:6px;">0,00</div><div class="c n" style="left:1491.5px;width:116.5px;padding-right:6px;">930 422,55</div><div class="c n" style="left:1609px;width:117px;padding-right:6px;">0,00</div><div class="c n" style="left:1727px;width:107px;padding-right:6px;">930 422,55</div><div class="c n" style="left:1835px;width:107px;padding-right:6px;">0,00</div></div>
<div class="row" style="left:0;top:508.44px"><svg style="left:10.2px;top:10.3px" width="7" height="7"><path d="M7 0 L7 7 L0 7 Z" fill="#6a6a6a"/></svg><div class="c" style="left:27px;top:0.2px;font-size:13.2px;color:#333">500LO</div><div class="c" style="left:137.5px;top:0.2px;font-size:13.2px;color:#333">Koszty działalności produkcyjnej - Łódź</div><div class="c n" style="left:807.5px;width:106.5px;padding-right:6px;">924 810,70</div><div class="c n" style="left:915px;width:106.5px;padding-right:6px;">0,00</div><div class="c n" style="left:1022.5px;width:98.5px;padding-right:6px;background:#c8ddf3;">0,00</div><div class="c n" style="left:1122px;width:98.5px;padding-right:6px;">0,00</div><div class="c n" style="left:1221.5px;width:133.0px;padding-right:6px;">5 611,85</div><div class="c n" style="left:1355.5px;width:135.0px;padding-right:6px;">0,00</div><div class="c n" style="left:1491.5px;width:116.5px;padding-right:6px;">930 422,55</div><div class="c n" style="left:1609px;width:117px;padding-right:6px;">0,00</div><div class="c n" style="left:1727px;width:107px;padding-right:6px;">930 422,55</div><div class="c n" style="left:1835px;width:107px;padding-right:6px;">0,00</div></div>
<div class="row" style="left:0;top:532.63px"><svg style="left:10.2px;top:10.3px" width="7" height="7"><path d="M7 0 L7 7 L0 7 Z" fill="#6a6a6a"/></svg><div class="c" style="left:27px;top:0.2px;font-size:13.2px;color:#333">500LOPLO</div><div class="c" style="left:137.5px;top:0.2px;font-size:13.2px;color:#333">Koszty działalności produkcyjnej - Łódź-Publ. ZLO</div><div class="c n" style="left:807.5px;width:106.5px;padding-right:6px;">1 578,00</div><div class="c n" style="left:915px;width:106.5px;padding-right:6px;">0,00</div><div class="c n" style="left:1022.5px;width:98.5px;padding-right:6px;background:#c8ddf3;">0,00</div><div class="c n" style="left:1122px;width:98.5px;padding-right:6px;">0,00</div><div class="c n" style="left:1221.5px;width:133.0px;padding-right:6px;">111,25</div><div class="c n" style="left:1355.5px;width:135.0px;padding-right:6px;">0,00</div><div class="c n" style="left:1491.5px;width:116.5px;padding-right:6px;">1 689,25</div><div class="c n" style="left:1609px;width:117px;padding-right:6px;">0,00</div><div class="c n" style="left:1727px;width:107px;padding-right:6px;">1 689,25</div><div class="c n" style="left:1835px;width:107px;padding-right:6px;">0,00</div></div>
<div class="row" style="left:0;top:556.82px"><svg style="left:10.2px;top:10.3px" width="7" height="7"><path d="M7 0 L7 7 L0 7 Z" fill="#6a6a6a"/></svg><div class="c" style="left:27px;top:0.2px;font-size:13.2px;color:#333">500LOPLO00</div><div class="c" style="left:137.5px;top:0.2px;font-size:13.2px;color:#333">Koszty działalności produkcyjnej - Łódź-Publ. ZLO - amortyzacja</div><div class="c n" style="left:807.5px;width:106.5px;padding-right:6px;">1 578,00</div><div class="c n" style="left:915px;width:106.5px;padding-right:6px;">0,00</div><div class="c n" style="left:1022.5px;width:98.5px;padding-right:6px;background:#c8ddf3;">0,00</div><div class="c n" style="left:1122px;width:98.5px;padding-right:6px;">0,00</div><div class="c n" style="left:1221.5px;width:133.0px;padding-right:6px;">111,25</div><div class="c n" style="left:1355.5px;width:135.0px;padding-right:6px;">0,00</div><div class="c n" style="left:1491.5px;width:116.5px;padding-right:6px;">1 689,25</div><div class="c n" style="left:1609px;width:117px;padding-right:6px;">0,00</div><div class="c n" style="left:1727px;width:107px;padding-right:6px;">1 689,25</div><div class="c n" style="left:1835px;width:107px;padding-right:6px;">0,00</div></div>
<div class="row" style="left:0;top:581.01px"><svg style="left:10.2px;top:10.3px" width="7" height="7"><path d="M7 0 L7 7 L0 7 Z" fill="#6a6a6a"/></svg><div class="c" style="left:27px;top:0.2px;font-size:13.2px;color:#333">500LOPLO002</div><div class="c" style="left:137.5px;top:0.2px;font-size:13.2px;color:#333">Koszty działalności produkcyjnej - Łódź-Publ. ZLO - amortyzacja-amortyzacja WNiP</div><div class="c n" style="left:807.5px;width:106.5px;padding-right:6px;">1 578,00</div><div class="c n" style="left:915px;width:106.5px;padding-right:6px;">0,00</div><div class="c n" style="left:1022.5px;width:98.5px;padding-right:6px;">0,00</div><div class="c n" style="left:1122px;width:98.5px;padding-right:6px;">0,00</div><div class="c n" style="left:1221.5px;width:133.0px;padding-right:6px;">111,25</div><div class="c n" style="left:1355.5px;width:135.0px;padding-right:6px;">0,00</div><div class="c n" style="left:1491.5px;width:116.5px;padding-right:6px;">1 689,25</div><div class="c n" style="left:1609px;width:117px;padding-right:6px;">0,00</div><div class="c n" style="left:1727px;width:107px;padding-right:6px;">1 689,25</div><div class="c n" style="left:1835px;width:107px;padding-right:6px;">0,00</div></div>
<div class="row" style="left:0;top:605.20px"><svg style="left:10.2px;top:10.3px" width="7" height="7"><path d="M7 0 L7 7 L0 7 Z" fill="#6a6a6a"/></svg><div class="c" style="left:27px;top:0.2px;font-size:13.2px;color:#333">500LOZPS</div><div class="c" style="left:137.5px;top:0.2px;font-size:13.2px;color:#333">Koszty działalności produkcyjnej - Łódź-Policealna</div><div class="c n" style="left:807.5px;width:106.5px;padding-right:6px;">923 232,70</div><div class="c n" style="left:915px;width:106.5px;padding-right:6px;">0,00</div><div class="c n" style="left:1022.5px;width:98.5px;padding-right:6px;">0,00</div><div class="c n" style="left:1122px;width:98.5px;padding-right:6px;">0,00</div><div class="c n" style="left:1221.5px;width:133.0px;padding-right:6px;">5 500,60</div><div class="c n" style="left:1355.5px;width:135.0px;padding-right:6px;">0,00</div><div class="c n" style="left:1491.5px;width:116.5px;padding-right:6px;">928 733,30</div><div class="c n" style="left:1609px;width:117px;padding-right:6px;">0,00</div><div class="c n" style="left:1727px;width:107px;padding-right:6px;">928 733,30</div><div class="c n" style="left:1835px;width:107px;padding-right:6px;">0,00</div></div>
<div class="vl" style="left:130px;top:0;height:622px"></div>
<div class="vl" style="left:806.5px;top:0;height:622px"></div>
<div class="vl" style="left:914px;top:0;height:622px"></div>
<div class="vl" style="left:1021.5px;top:0;height:622px"></div>
<div class="vl" style="left:1121px;top:0;height:622px"></div>
<div class="vl" style="left:1220.5px;top:0;height:622px"></div>
<div class="vl" style="left:1354.5px;top:0;height:622px"></div>
<div class="vl" style="left:1490.5px;top:0;height:622px"></div>
<div class="vl" style="left:1608px;top:0;height:622px"></div>
<div class="vl" style="left:1726px;top:0;height:622px"></div>
<div class="vl" style="left:1834px;top:0;height:622px"></div>
<div class="vl" style="left:1942px;top:0;height:622px"></div>
<div class="a" style="left:1022.5px;top:557.32px;width:98px;height:22.5px;border:1.5px dotted #3a3a3a;border-radius:2px"></div>
</div>
<div class="a" style="left:2421.5px;top:398.5px;width:20.5px;height:621.5px;background:#e4e4e6"></div>
<svg style="left:2426.8px;top:405px" width="10" height="6"><path d="M0 5.5 L5 0 L10 5.5 Z" fill="#9a9a9a"/></svg>
<svg style="left:2426.8px;top:1008px" width="10" height="6"><path d="M0 0 L5 5.5 L10 0 Z" fill="#9a9a9a"/></svg>
<div class="a" style="left:2426.5px;top:662.5px;width:11px;height:100px;background:#c1c1c3"></div>
<div class="a" style="left:2421px;top:349.5px;width:1px;height:48.5px;background:#d8dbe0"></div>
<div class="a" style="left:119px;top:1020px;width:2323px;height:7px;background:linear-gradient(#f2f2f3,#e9e9eb)"></div>
<svg style="left:1276px;top:1021.5px" width="8" height="5"><path d="M0 0 L8 0 L4 4.5 Z" fill="#777"/></svg>
<div class="a" style="left:119px;top:1027px;width:2323px;height:309px;background:#fff"></div>
<svg style="left:0;top:0" width="2560" height="1535"><line x1="788.54" y1="1038.9" x2="788.54" y2="1301.1" stroke="#dedede" stroke-width="1"/><line x1="841.58" y1="1038.9" x2="841.58" y2="1301.1" stroke="#dedede" stroke-width="1"/><line x1="894.62" y1="1038.9" x2="894.62" y2="1301.1" stroke="#dedede" stroke-width="1"/><line x1="947.66" y1="1038.9" x2="947.66" y2="1301.1" stroke="#dedede" stroke-width="1"/><line x1="1000.70" y1="1038.9" x2="1000.70" y2="1301.1" stroke="#dedede" stroke-width="1"/><line x1="1053.74" y1="1038.9" x2="1053.74" y2="1301.1" stroke="#dedede" stroke-width="1"/><line x1="1106.78" y1="1038.9" x2="1106.78" y2="1301.1" stroke="#dedede" stroke-width="1"/><line x1="1159.82" y1="1038.9" x2="1159.82" y2="1301.1" stroke="#dedede" stroke-width="1"/><line x1="1212.86" y1="1038.9" x2="1212.86" y2="1301.1" stroke="#dedede" stroke-width="1"/><line x1="1265.90" y1="1038.9" x2="1265.90" y2="1301.1" stroke="#dedede" stroke-width="1"/><line x1="1318.94" y1="1038.9" x2="1318.94" y2="1301.1" stroke="#dedede" stroke-width="1"/><line x1="1371.98" y1="1038.9" x2="1371.98" y2="1301.1" stroke="#dedede" stroke-width="1"/><line x1="1425.02" y1="1038.9" x2="1425.02" y2="1301.1" stroke="#dedede" stroke-width="1"/><line x1="1478.06" y1="1038.9" x2="1478.06" y2="1301.1" stroke="#dedede" stroke-width="1"/><line x1="1531.10" y1="1038.9" x2="1531.10" y2="1301.1" stroke="#dedede" stroke-width="1"/><line x1="1584.14" y1="1038.9" x2="1584.14" y2="1301.1" stroke="#dedede" stroke-width="1"/><line x1="1637.18" y1="1038.9" x2="1637.18" y2="1301.1" stroke="#dedede" stroke-width="1"/><line x1="1690.22" y1="1038.9" x2="1690.22" y2="1301.1" stroke="#dedede" stroke-width="1"/><line x1="1743.26" y1="1038.9" x2="1743.26" y2="1301.1" stroke="#dedede" stroke-width="1"/><line x1="1796.30" y1="1038.9" x2="1796.30" y2="1301.1" stroke="#dedede" stroke-width="1"/><line x1="1849.34" y1="1038.9" x2="1849.34" y2="1301.1" stroke="#dedede" stroke-width="1"/><line x1="1902.38" y1="1038.9" x2="1902.38" y2="1301.1" stroke="#dedede" stroke-width="1"/><line x1="1955.42" y1="1038.9" x2="1955.42" y2="1301.1" stroke="#dedede" stroke-width="1"/><line x1="2008.46" y1="1038.9" x2="2008.46" y2="1301.1" stroke="#dedede" stroke-width="1"/><line x1="2061.50" y1="1038.9" x2="2061.50" y2="1301.1" stroke="#dedede" stroke-width="1"/><line x1="2114.54" y1="1038.9" x2="2114.54" y2="1301.1" stroke="#dedede" stroke-width="1"/><line x1="2167.58" y1="1038.9" x2="2167.58" y2="1301.1" stroke="#dedede" stroke-width="1"/><path d="M735.5 1038.9 H2223.5 V1301.1" fill="none" stroke="#c9c9c9" stroke-width="1.6"/><path d="M735.5 1038.4 V1301.1 H2223.5" fill="none" stroke="#bdbdbd" stroke-width="1.8"/><line x1="735.50" y1="1301.1" x2="735.50" y2="1307.1" stroke="#b8b8b8" stroke-width="1.4"/><line x1="753.18" y1="1301.1" x2="753.18" y2="1304.1" stroke="#c4c4c4" stroke-width="1.2"/><line x1="770.86" y1="1301.1" x2="770.86" y2="1304.1" stroke="#c4c4c4" stroke-width="1.2"/><line x1="788.54" y1="1301.1" x2="788.54" y2="1307.1" stroke="#b8b8b8" stroke-width="1.4"/><line x1="806.22" y1="1301.1" x2="806.22" y2="1304.1" stroke="#c4c4c4" stroke-width="1.2"/><line x1="823.90" y1="1301.1" x2="823.90" y2="1304.1" stroke="#c4c4c4" stroke-width="1.2"/><line x1="841.58" y1="1301.1" x2="841.58" y2="1307.1" stroke="#b8b8b8" stroke-width="1.4"/><line x1="859.26" y1="1301.1" x2="859.26" y2="1304.1" stroke="#c4c4c4" stroke-width="1.2"/><line x1="876.94" y1="1301.1" x2="876.94" y2="1304.1" stroke="#c4c4c4" stroke-width="1.2"/><line x1="894.62" y1="1301.1" x2="894.62" y2="1307.1" stroke="#b8b8b8" stroke-width="1.4"/><line x1="912.30" y1="1301.1" x2="912.30" y2="1304.1" stroke="#c4c4c4" stroke-width="1.2"/><line x1="929.98" y1="1301.1" x2="929.98" y2="1304.1" stroke="#c4c4c4" stroke-width="1.2"/><line x1="947.66" y1="1301.1" x2="947.66" y2="1307.1" stroke="#b8b8b8" stroke-width="1.4"/><line x1="965.34" y1="1301.1" x2="965.34" y2="1304.1" stroke="#c4c4c4" stroke-width="1.2"/><line x1="983.02" y1="1301.1" x2="983.02" y2="1304.1" stroke="#c4c4c4" stroke-width="1.2"/><line x1="1000.70" y1="1301.1" x2="1000.70" y2="1307.1" stroke="#b8b8b8" stroke-width="1.4"/><line x1="1018.38" y1="1301.1" x2="1018.38" y2="1304.1" stroke="#c4c4c4" stroke-width="1.2"/><line x1="1036.06" y1="1301.1" x2="1036.06" y2="1304.1" stroke="#c4c4c4" stroke-width="1.2"/><line x1="1053.74" y1="1301.1" x2="1053.74" y2="1307.1" stroke="#b8b8b8" stroke-width="1.4"/><line x1="1071.42" y1="1301.1" x2="1071.42" y2="1304.1" stroke="#c4c4c4" stroke-width="1.2"/><line x1="1089.10" y1="1301.1" x2="1089.10" y2="1304.1" stroke="#c4c4c4" stroke-width="1.2"/><line x1="1106.78" y1="1301.1" x2="1106.78" y2="1307.1" stroke="#b8b8b8" stroke-width="1.4"/><line x1="1124.46" y1="1301.1" x2="1124.46" y2="1304.1" stroke="#c4c4c4" stroke-width="1.2"/><line x1="1142.14" y1="1301.1" x2="1142.14" y2="1304.1" stroke="#c4c4c4" stroke-width="1.2"/><line x1="1159.82" y1="1301.1" x2="1159.82" y2="1307.1" stroke="#b8b8b8" stroke-width="1.4"/><line x1="1177.50" y1="1301.1" x2="1177.50" y2="1304.1" stroke="#c4c4c4" stroke-width="1.2"/><line x1="1195.18" y1="1301.1" x2="1195.18" y2="1304.1" stroke="#c4c4c4" stroke-width="1.2"/><line x1="1212.86" y1="1301.1" x2="1212.86" y2="1307.1" stroke="#b8b8b8" stroke-width="1.4"/><line x1="1230.54" y1="1301.1" x2="1230.54" y2="1304.1" stroke="#c4c4c4" stroke-width="1.2"/><line x1="1248.22" y1="1301.1" x2="1248.22" y2="1304.1" stroke="#c4c4c4" stroke-width="1.2"/><line x1="1265.90" y1="1301.1" x2="1265.90" y2="1307.1" stroke="#b8b8b8" stroke-width="1.4"/><line x1="1283.58" y1="1301.1" x2="1283.58" y2="1304.1" stroke="#c4c4c4" stroke-width="1.2"/><line x1="1301.26" y1="1301.1" x2="1301.26" y2="1304.1" stroke="#c4c4c4" stroke-width="1.2"/><line x1="1318.94" y1="1301.1" x2="1318.94" y2="1307.1" stroke="#b8b8b8" stroke-width="1.4"/><line x1="1336.62" y1="1301.1" x2="1336.62" y2="1304.1" stroke="#c4c4c4" stroke-width="1.2"/><line x1="1354.30" y1="1301.1" x2="1354.30" y2="1304.1" stroke="#c4c4c4" stroke-width="1.2"/><line x1="1371.98" y1="1301.1" x2="1371.98" y2="1307.1" stroke="#b8b8b8" stroke-width="1.4"/><line x1="1389.66" y1="1301.1" x2="1389.66" y2="1304.1" stroke="#c4c4c4" stroke-width="1.2"/><line x1="1407.34" y1="1301.1" x2="1407.34" y2="1304.1" stroke="#c4c4c4" stroke-width="1.2"/><line x1="1425.02" y1="1301.1" x2="1425.02" y2="1307.1" stroke="#b8b8b8" stroke-width="1.4"/><line x1="1442.70" y1="1301.1" x2="1442.70" y2="1304.1" stroke="#c4c4c4" stroke-width="1.2"/><line x1="1460.38" y1="1301.1" x2="1460.38" y2="1304.1" stroke="#c4c4c4" stroke-width="1.2"/><line x1="1478.06" y1="1301.1" x2="1478.06" y2="1307.1" stroke="#b8b8b8" stroke-width="1.4"/><line x1="1495.74" y1="1301.1" x2="1495.74" y2="1304.1" stroke="#c4c4c4" stroke-width="1.2"/><line x1="1513.42" y1="1301.1" x2="1513.42" y2="1304.1" stroke="#c4c4c4" stroke-width="1.2"/><line x1="1531.10" y1="1301.1" x2="1531.10" y2="1307.1" stroke="#b8b8b8" stroke-width="1.4"/><line x1="1548.78" y1="1301.1" x2="1548.78" y2="1304.1" stroke="#c4c4c4" stroke-width="1.2"/><line x1="1566.46" y1="1301.1" x2="1566.46" y2="1304.1" stroke="#c4c4c4" stroke-width="1.2"/><line x1="1584.14" y1="1301.1" x2="1584.14" y2="1307.1" stroke="#b8b8b8" stroke-width="1.4"/><line x1="1601.82" y1="1301.1" x2="1601.82" y2="1304.1" stroke="#c4c4c4" stroke-width="1.2"/><line x1="1619.50" y1="1301.1" x2="1619.50" y2="1304.1" stroke="#c4c4c4" stroke-width="1.2"/><line x1="1637.18" y1="1301.1" x2="1637.18" y2="1307.1" stroke="#b8b8b8" stroke-width="1.4"/><line x1="1654.86" y1="1301.1" x2="1654.86" y2="1304.1" stroke="#c4c4c4" stroke-width="1.2"/><line x1="1672.54" y1="1301.1" x2="1672.54" y2="1304.1" stroke="#c4c4c4" stroke-width="1.2"/><line x1="1690.22" y1="1301.1" x2="1690.22" y2="1307.1" stroke="#b8b8b8" stroke-width="1.4"/><line x1="1707.90" y1="1301.1" x2="1707.90" y2="1304.1" stroke="#c4c4c4" stroke-width="1.2"/><line x1="1725.58" y1="1301.1" x2="1725.58" y2="1304.1" stroke="#c4c4c4" stroke-width="1.2"/><line x1="1743.26" y1="1301.1" x2="1743.26" y2="1307.1" stroke="#b8b8b8" stroke-width="1.4"/><line x1="1760.94" y1="1301.1" x2="1760.94" y2="1304.1" stroke="#c4c4c4" stroke-width="1.2"/><line x1="1778.62" y1="1301.1" x2="1778.62" y2="1304.1" stroke="#c4c4c4" stroke-width="1.2"/><line x1="1796.30" y1="1301.1" x2="1796.30" y2="1307.1" stroke="#b8b8b8" stroke-width="1.4"/><line x1="1813.98" y1="1301.1" x2="1813.98" y2="1304.1" stroke="#c4c4c4" stroke-width="1.2"/><line x1="1831.66" y1="1301.1" x2="1831.66" y2="1304.1" stroke="#c4c4c4" stroke-width="1.2"/><line x1="1849.34" y1="1301.1" x2="1849.34" y2="1307.1" stroke="#b8b8b8" stroke-width="1.4"/><line x1="1867.02" y1="1301.1" x2="1867.02" y2="1304.1" stroke="#c4c4c4" stroke-width="1.2"/><line x1="1884.70" y1="1301.1" x2="1884.70" y2="1304.1" stroke="#c4c4c4" stroke-width="1.2"/><line x1="1902.38" y1="1301.1" x2="1902.38" y2="1307.1" stroke="#b8b8b8" stroke-width="1.4"/><line x1="1920.06" y1="1301.1" x2="1920.06" y2="1304.1" stroke="#c4c4c4" stroke-width="1.2"/><line x1="1937.74" y1="1301.1" x2="1937.74" y2="1304.1" stroke="#c4c4c4" stroke-width="1.2"/><line x1="1955.42" y1="1301.1" x2="1955.42" y2="1307.1" stroke="#b8b8b8" stroke-width="1.4"/><line x1="1973.10" y1="1301.1" x2="1973.10" y2="1304.1" stroke="#c4c4c4" stroke-width="1.2"/><line x1="1990.78" y1="1301.1" x2="1990.78" y2="1304.1" stroke="#c4c4c4" stroke-width="1.2"/><line x1="2008.46" y1="1301.1" x2="2008.46" y2="1307.1" stroke="#b8b8b8" stroke-width="1.4"/><line x1="2026.14" y1="1301.1" x2="2026.14" y2="1304.1" stroke="#c4c4c4" stroke-width="1.2"/><line x1="2043.82" y1="1301.1" x2="2043.82" y2="1304.1" stroke="#c4c4c4" stroke-width="1.2"/><line x1="2061.50" y1="1301.1" x2="2061.50" y2="1307.1" stroke="#b8b8b8" stroke-width="1.4"/><line x1="2079.18" y1="1301.1" x2="2079.18" y2="1304.1" stroke="#c4c4c4" stroke-width="1.2"/><line x1="2096.86" y1="1301.1" x2="2096.86" y2="1304.1" stroke="#c4c4c4" stroke-width="1.2"/><line x1="2114.54" y1="1301.1" x2="2114.54" y2="1307.1" stroke="#b8b8b8" stroke-width="1.4"/><line x1="2132.22" y1="1301.1" x2="2132.22" y2="1304.1" stroke="#c4c4c4" stroke-width="1.2"/><line x1="2149.90" y1="1301.1" x2="2149.90" y2="1304.1" stroke="#c4c4c4" stroke-width="1.2"/><line x1="2167.58" y1="1301.1" x2="2167.58" y2="1307.1" stroke="#b8b8b8" stroke-width="1.4"/><line x1="2185.26" y1="1301.1" x2="2185.26" y2="1304.1" stroke="#c4c4c4" stroke-width="1.2"/><line x1="2202.94" y1="1301.1" x2="2202.94" y2="1304.1" stroke="#c4c4c4" stroke-width="1.2"/><line x1="2220.62" y1="1301.1" x2="2220.62" y2="1307.1" stroke="#b8b8b8" stroke-width="1.4"/><line x1="729.0" y1="1295.40" x2="735.5" y2="1295.40" stroke="#c0c0c0" stroke-width="1.3"/><line x1="733.0" y1="1292.55" x2="735.5" y2="1292.55" stroke="#cccccc" stroke-width="1"/><line x1="733.0" y1="1298.25" x2="735.5" y2="1298.25" stroke="#cccccc" stroke-width="1"/><line x1="733.0" y1="1301.10" x2="735.5" y2="1301.10" stroke="#cccccc" stroke-width="1"/><line x1="729.0" y1="1284.00" x2="735.5" y2="1284.00" stroke="#c0c0c0" stroke-width="1.3"/><line x1="733.0" y1="1281.15" x2="735.5" y2="1281.15" stroke="#cccccc" stroke-width="1"/><line x1="733.0" y1="1286.85" x2="735.5" y2="1286.85" stroke="#cccccc" stroke-width="1"/><line x1="733.0" y1="1289.70" x2="735.5" y2="1289.70" stroke="#cccccc" stroke-width="1"/><line x1="729.0" y1="1272.60" x2="735.5" y2="1272.60" stroke="#c0c0c0" stroke-width="1.3"/><line x1="733.0" y1="1269.75" x2="735.5" y2="1269.75" stroke="#cccccc" stroke-width="1"/><line x1="733.0" y1="1275.45" x2="735.5" y2="1275.45" stroke="#cccccc" stroke-width="1"/><line x1="733.0" y1="1278.30" x2="735.5" y2="1278.30" stroke="#cccccc" stroke-width="1"/><line x1="729.0" y1="1261.20" x2="735.5" y2="1261.20" stroke="#c0c0c0" stroke-width="1.3"/><line x1="733.0" y1="1258.35" x2="735.5" y2="1258.35" stroke="#cccccc" stroke-width="1"/><line x1="733.0" y1="1264.05" x2="735.5" y2="1264.05" stroke="#cccccc" stroke-width="1"/><line x1="733.0" y1="1266.90" x2="735.5" y2="1266.90" stroke="#cccccc" stroke-width="1"/><line x1="729.0" y1="1249.80" x2="735.5" y2="1249.80" stroke="#c0c0c0" stroke-width="1.3"/><line x1="733.0" y1="1246.95" x2="735.5" y2="1246.95" stroke="#cccccc" stroke-width="1"/><line x1="733.0" y1="1252.65" x2="735.5" y2="1252.65" stroke="#cccccc" stroke-width="1"/><line x1="733.0" y1="1255.50" x2="735.5" y2="1255.50" stroke="#cccccc" stroke-width="1"/><line x1="729.0" y1="1238.40" x2="735.5" y2="1238.40" stroke="#c0c0c0" stroke-width="1.3"/><line x1="733.0" y1="1235.55" x2="735.5" y2="1235.55" stroke="#cccccc" stroke-width="1"/><line x1="733.0" y1="1241.25" x2="735.5" y2="1241.25" stroke="#cccccc" stroke-width="1"/><line x1="733.0" y1="1244.10" x2="735.5" y2="1244.10" stroke="#cccccc" stroke-width="1"/><line x1="729.0" y1="1227.00" x2="735.5" y2="1227.00" stroke="#c0c0c0" stroke-width="1.3"/><line x1="733.0" y1="1224.15" x2="735.5" y2="1224.15" stroke="#cccccc" stroke-width="1"/><line x1="733.0" y1="1229.85" x2="735.5" y2="1229.85" stroke="#cccccc" stroke-width="1"/><line x1="733.0" y1="1232.70" x2="735.5" y2="1232.70" stroke="#cccccc" stroke-width="1"/><line x1="729.0" y1="1215.60" x2="735.5" y2="1215.60" stroke="#c0c0c0" stroke-width="1.3"/><line x1="733.0" y1="1212.75" x2="735.5" y2="1212.75" stroke="#cccccc" stroke-width="1"/><line x1="733.0" y1="1218.45" x2="735.5" y2="1218.45" stroke="#cccccc" stroke-width="1"/><line x1="733.0" y1="1221.30" x2="735.5" y2="1221.30" stroke="#cccccc" stroke-width="1"/><line x1="729.0" y1="1204.20" x2="735.5" y2="1204.20" stroke="#c0c0c0" stroke-width="1.3"/><line x1="733.0" y1="1201.35" x2="735.5" y2="1201.35" stroke="#cccccc" stroke-width="1"/><line x1="733.0" y1="1207.05" x2="735.5" y2="1207.05" stroke="#cccccc" stroke-width="1"/><line x1="733.0" y1="1209.90" x2="735.5" y2="1209.90" stroke="#cccccc" stroke-width="1"/><line x1="729.0" y1="1192.80" x2="735.5" y2="1192.80" stroke="#c0c0c0" stroke-width="1.3"/><line x1="733.0" y1="1189.95" x2="735.5" y2="1189.95" stroke="#cccccc" stroke-width="1"/><line x1="733.0" y1="1195.65" x2="735.5" y2="1195.65" stroke="#cccccc" stroke-width="1"/><line x1="733.0" y1="1198.50" x2="735.5" y2="1198.50" stroke="#cccccc" stroke-width="1"/><line x1="729.0" y1="1181.40" x2="735.5" y2="1181.40" stroke="#c0c0c0" stroke-width="1.3"/><line x1="733.0" y1="1178.55" x2="735.5" y2="1178.55" stroke="#cccccc" stroke-width="1"/><line x1="733.0" y1="1184.25" x2="735.5" y2="1184.25" stroke="#cccccc" stroke-width="1"/><line x1="733.0" y1="1187.10" x2="735.5" y2="1187.10" stroke="#cccccc" stroke-width="1"/><line x1="729.0" y1="1170.00" x2="735.5" y2="1170.00" stroke="#c0c0c0" stroke-width="1.3"/><line x1="733.0" y1="1167.15" x2="735.5" y2="1167.15" stroke="#cccccc" stroke-width="1"/><line x1="733.0" y1="1172.85" x2="735.5" y2="1172.85" stroke="#cccccc" stroke-width="1"/><line x1="733.0" y1="1175.70" x2="735.5" y2="1175.70" stroke="#cccccc" stroke-width="1"/><line x1="729.0" y1="1158.60" x2="735.5" y2="1158.60" stroke="#c0c0c0" stroke-width="1.3"/><line x1="733.0" y1="1155.75" x2="735.5" y2="1155.75" stroke="#cccccc" stroke-width="1"/><line x1="733.0" y1="1161.45" x2="735.5" y2="1161.45" stroke="#cccccc" stroke-width="1"/><line x1="733.0" y1="1164.30" x2="735.5" y2="1164.30" stroke="#cccccc" stroke-width="1"/><line x1="729.0" y1="1147.20" x2="735.5" y2="1147.20" stroke="#c0c0c0" stroke-width="1.3"/><line x1="733.0" y1="1144.35" x2="735.5" y2="1144.35" stroke="#cccccc" stroke-width="1"/><line x1="733.0" y1="1150.05" x2="735.5" y2="1150.05" stroke="#cccccc" stroke-width="1"/><line x1="733.0" y1="1152.90" x2="735.5" y2="1152.90" stroke="#cccccc" stroke-width="1"/><line x1="729.0" y1="1135.80" x2="735.5" y2="1135.80" stroke="#c0c0c0" stroke-width="1.3"/><line x1="733.0" y1="1132.95" x2="735.5" y2="1132.95" stroke="#cccccc" stroke-width="1"/><line x1="733.0" y1="1138.65" x2="735.5" y2="1138.65" stroke="#cccccc" stroke-width="1"/><line x1="733.0" y1="1141.50" x2="735.5" y2="1141.50" stroke="#cccccc" stroke-width="1"/><line x1="729.0" y1="1124.40" x2="735.5" y2="1124.40" stroke="#c0c0c0" stroke-width="1.3"/><line x1="733.0" y1="1121.55" x2="735.5" y2="1121.55" stroke="#cccccc" stroke-width="1"/><line x1="733.0" y1="1127.25" x2="735.5" y2="1127.25" stroke="#cccccc" stroke-width="1"/><line x1="733.0" y1="1130.10" x2="735.5" y2="1130.10" stroke="#cccccc" stroke-width="1"/><line x1="729.0" y1="1113.00" x2="735.5" y2="1113.00" stroke="#c0c0c0" stroke-width="1.3"/><line x1="733.0" y1="1110.15" x2="735.5" y2="1110.15" stroke="#cccccc" stroke-width="1"/><line x1="733.0" y1="1115.85" x2="735.5" y2="1115.85" stroke="#cccccc" stroke-width="1"/><line x1="733.0" y1="1118.70" x2="735.5" y2="1118.70" stroke="#cccccc" stroke-width="1"/><line x1="729.0" y1="1101.60" x2="735.5" y2="1101.60" stroke="#c0c0c0" stroke-width="1.3"/><line x1="733.0" y1="1098.75" x2="735.5" y2="1098.75" stroke="#cccccc" stroke-width="1"/><line x1="733.0" y1="1104.45" x2="735.5" y2="1104.45" stroke="#cccccc" stroke-width="1"/><line x1="733.0" y1="1107.30" x2="735.5" y2="1107.30" stroke="#cccccc" stroke-width="1"/><line x1="729.0" y1="1090.20" x2="735.5" y2="1090.20" stroke="#c0c0c0" stroke-width="1.3"/><line x1="733.0" y1="1087.35" x2="735.5" y2="1087.35" stroke="#cccccc" stroke-width="1"/><line x1="733.0" y1="1093.05" x2="735.5" y2="1093.05" stroke="#cccccc" stroke-width="1"/><line x1="733.0" y1="1095.90" x2="735.5" y2="1095.90" stroke="#cccccc" stroke-width="1"/><line x1="729.0" y1="1078.80" x2="735.5" y2="1078.80" stroke="#c0c0c0" stroke-width="1.3"/><line x1="733.0" y1="1075.95" x2="735.5" y2="1075.95" stroke="#cccccc" stroke-width="1"/><line x1="733.0" y1="1081.65" x2="735.5" y2="1081.65" stroke="#cccccc" stroke-width="1"/><line x1="733.0" y1="1084.50" x2="735.5" y2="1084.50" stroke="#cccccc" stroke-width="1"/><line x1="729.0" y1="1067.40" x2="735.5" y2="1067.40" stroke="#c0c0c0" stroke-width="1.3"/><line x1="733.0" y1="1064.55" x2="735.5" y2="1064.55" stroke="#cccccc" stroke-width="1"/><line x1="733.0" y1="1070.25" x2="735.5" y2="1070.25" stroke="#cccccc" stroke-width="1"/><line x1="733.0" y1="1073.10" x2="735.5" y2="1073.10" stroke="#cccccc" stroke-width="1"/><line x1="729.0" y1="1056.00" x2="735.5" y2="1056.00" stroke="#c0c0c0" stroke-width="1.3"/><line x1="733.0" y1="1053.15" x2="735.5" y2="1053.15" stroke="#cccccc" stroke-width="1"/><line x1="733.0" y1="1058.85" x2="735.5" y2="1058.85" stroke="#cccccc" stroke-width="1"/><line x1="733.0" y1="1061.70" x2="735.5" y2="1061.70" stroke="#cccccc" stroke-width="1"/><line x1="729.0" y1="1044.60" x2="735.5" y2="1044.60" stroke="#c0c0c0" stroke-width="1.3"/><line x1="733.0" y1="1041.75" x2="735.5" y2="1041.75" stroke="#cccccc" stroke-width="1"/><line x1="733.0" y1="1047.45" x2="735.5" y2="1047.45" stroke="#cccccc" stroke-width="1"/><line x1="733.0" y1="1050.30" x2="735.5" y2="1050.30" stroke="#cccccc" stroke-width="1"/><rect x="736.3" y="1257.60" width="1086.52" height="7.8" fill="#4a7dba"/><rect x="736.3" y="1223.40" width="1086.52" height="7.8" fill="#4a7dba"/><rect x="736.3" y="1166.40" width="25.72" height="7.8" fill="#4a7dba"/><rect x="736.3" y="1143.60" width="25.72" height="7.8" fill="#4a7dba"/><rect x="736.3" y="1120.80" width="237.82" height="7.8" fill="#4a7dba"/><rect x="736.3" y="1109.40" width="237.82" height="7.8" fill="#4a7dba"/><rect x="736.3" y="1086.60" width="1351.66" height="7.8" fill="#4a7dba"/></svg>
<div class="t" style="left:695.50px;width:80px;text-align:center;top:1314.5px;font-size:12.8px;color:#3d3d3d">0</div>
<div class="t" style="left:748.54px;width:80px;text-align:center;top:1314.5px;font-size:12.8px;color:#3d3d3d">200</div>
<div class="t" style="left:801.58px;width:80px;text-align:center;top:1314.5px;font-size:12.8px;color:#3d3d3d">400</div>
<div class="t" style="left:854.62px;width:80px;text-align:center;top:1314.5px;font-size:12.8px;color:#3d3d3d">600</div>
<div class="t" style="left:907.66px;width:80px;text-align:center;top:1314.5px;font-size:12.8px;color:#3d3d3d">800</div>
<div class="t" style="left:960.70px;width:80px;text-align:center;top:1314.5px;font-size:12.8px;color:#3d3d3d">1 000</div>
<div class="t" style="left:1013.74px;width:80px;text-align:center;top:1314.5px;font-size:12.8px;color:#3d3d3d">1 200</div>
<div class="t" style="left:1066.78px;width:80px;text-align:center;top:1314.5px;font-size:12.8px;color:#3d3d3d">1 400</div>
<div class="t" style="left:1119.82px;width:80px;text-align:center;top:1314.5px;font-size:12.8px;color:#3d3d3d">1 600</div>
<div class="t" style="left:1172.86px;width:80px;text-align:center;top:1314.5px;font-size:12.8px;color:#3d3d3d">1 800</div>
<div class="t" style="left:1225.90px;width:80px;text-align:center;top:1314.5px;font-size:12.8px;color:#3d3d3d">2 000</div>
<div class="t" style="left:1278.94px;width:80px;text-align:center;top:1314.5px;font-size:12.8px;color:#3d3d3d">2 200</div>
<div class="t" style="left:1331.98px;width:80px;text-align:center;top:1314.5px;font-size:12.8px;color:#3d3d3d">2 400</div>
<div class="t" style="left:1385.02px;width:80px;text-align:center;top:1314.5px;font-size:12.8px;color:#3d3d3d">2 600</div>
<div class="t" style="left:1438.06px;width:80px;text-align:center;top:1314.5px;font-size:12.8px;color:#3d3d3d">2 800</div>
<div class="t" style="left:1491.10px;width:80px;text-align:center;top:1314.5px;font-size:12.8px;color:#3d3d3d">3 000</div>
<div class="t" style="left:1544.14px;width:80px;text-align:center;top:1314.5px;font-size:12.8px;color:#3d3d3d">3 200</div>
<div class="t" style="left:1597.18px;width:80px;text-align:center;top:1314.5px;font-size:12.8px;color:#3d3d3d">3 400</div>
<div class="t" style="left:1650.22px;width:80px;text-align:center;top:1314.5px;font-size:12.8px;color:#3d3d3d">3 600</div>
<div class="t" style="left:1703.26px;width:80px;text-align:center;top:1314.5px;font-size:12.8px;color:#3d3d3d">3 800</div>
<div class="t" style="left:1756.30px;width:80px;text-align:center;top:1314.5px;font-size:12.8px;color:#3d3d3d">4 000</div>
<div class="t" style="left:1809.34px;width:80px;text-align:center;top:1314.5px;font-size:12.8px;color:#3d3d3d">4 200</div>
<div class="t" style="left:1862.38px;width:80px;text-align:center;top:1314.5px;font-size:12.8px;color:#3d3d3d">4 400</div>
<div class="t" style="left:1915.42px;width:80px;text-align:center;top:1314.5px;font-size:12.8px;color:#3d3d3d">4 600</div>
<div class="t" style="left:1968.46px;width:80px;text-align:center;top:1314.5px;font-size:12.8px;color:#3d3d3d">4 800</div>
<div class="t" style="left:2021.50px;width:80px;text-align:center;top:1314.5px;font-size:12.8px;color:#3d3d3d">5 000</div>
<div class="t" style="left:2074.54px;width:80px;text-align:center;top:1314.5px;font-size:12.8px;color:#3d3d3d">5 200</div>
<div class="t" style="left:2127.58px;width:80px;text-align:center;top:1314.5px;font-size:12.8px;color:#3d3d3d">5 400</div>
<div class="t" style="left:2171.62px;width:80px;text-align:center;top:1314.5px;font-size:12.8px;color:#3d3d3d">5 600</div>
<div class="t" style="left:122px;width:600.7px;text-align:right;top:1288.40px;font-size:13.1px;color:#3a3a3a;transform:scaleX(1.031);transform-origin:100% 50%">400 | Zespół IV - Koszty według rodzajów - amortyzacja</div>
<div class="t" style="left:122px;width:600.7px;text-align:right;top:1254.20px;font-size:13.1px;color:#3a3a3a;transform:scaleX(1.035);transform-origin:100% 50%">401 | Zespół IV - Koszty według rodzajów - zużycie mat. i ener.</div>
<div class="t" style="left:122px;width:600.7px;text-align:right;top:1220.00px;font-size:13.1px;color:#3a3a3a;transform:scaleX(1.024);transform-origin:100% 50%">40104 | Zespół IV - Koszty według rodzajów - zużycie mat. i ener.-BHP</div>
<div class="t" style="left:122px;width:600.7px;text-align:right;top:1185.80px;font-size:13.1px;color:#3a3a3a;transform:scaleX(1.023);transform-origin:100% 50%">401082 | Zespół IV - Koszty według rodzajów - zużycie mat. i ener.-samochody-paliwa</div>
<div class="t" style="left:122px;width:600.7px;text-align:right;top:1151.60px;font-size:13.1px;color:#3a3a3a;transform:scaleX(1.026);transform-origin:100% 50%">40203 | Zespół IV - Koszty według rodzajów - usługi obce-podwykonawstwo</div>
<div class="t" style="left:122px;width:600.7px;text-align:right;top:1117.40px;font-size:13.1px;color:#3a3a3a;transform:scaleX(1.038);transform-origin:100% 50%">403 | Zespół IV - Koszty według rodzajów - podatki i opł.</div>
<div class="t" style="left:122px;width:600.7px;text-align:right;top:1083.20px;font-size:13.1px;color:#3a3a3a;transform:scaleX(1.04);transform-origin:100% 50%">5 | Zespól 5</div>
<div class="t" style="left:122px;width:600.7px;text-align:right;top:1049.00px;font-size:13.1px;color:#3a3a3a;transform:scaleX(1.0);transform-origin:100% 50%">500LOPLO | Koszty działalności produkcyjnej - Łódź-Publ. ZLO</div>
<div class="a" style="left:2236.5px;top:1038.6px;width:194px;height:26px;border:1px solid #cfcfcf;background:#fff;overflow:hidden"><div class="a" style="left:6.5px;top:4.5px;width:18px;height:17px;border:1.3px solid #6a8fbf;background:#fff"></div><svg style="left:9px;top:7px" width="14" height="12"><path d="M2 6 L5.5 10 L12.5 1.5" fill="none" stroke="#3b74b8" stroke-width="1.8"/></svg><div class="t" style="left:32.5px;top:5.5px;font-size:13.2px;color:#333">SUMA ogólna | Obroty WN</div></div>
<div class="a" style="left:119px;top:1336px;width:2323px;height:29.5px;background:#f0f0f0;border-top:1px solid #e3e3e3"></div>
<div class="t" style="left:127px;top:1347px;font-size:12px;color:#111;font-weight:bold">*</div>
<div class="a" style="left:138.5px;top:1340px;width:1.3px;height:22px;background:#b5b5b5"></div>
<div class="t" style="left:1974.5px;top:1345.5px;font-size:13.3px;color:#252525">Suma: 15299,31; Średnia: 665,1873</div>
<div class="a" style="left:2192.5px;top:1340px;width:1.3px;height:22px;background:#b5b5b5"></div>
<div class="t" style="left:2199px;top:1345.5px;font-size:13.6px;color:#252525">Zaznaczono: 1x23</div>
<div class="a" style="left:2318.5px;top:1340px;width:1.3px;height:22px;background:#b5b5b5"></div>
<div class="t" style="left:2325px;top:1345.5px;font-size:13.7px;color:#252525">Rekordów: 142</div>
<div class="a" style="left:119px;top:1365px;width:2323px;height:44px;background:#d3d3d4;border-top:1.5px solid #bdbdbe"></div>
<svg style="left:128.5px;top:1373.5px" width="28" height="29"><g fill="none" stroke="#4a4a4a" stroke-width="1.4"><ellipse cx="13.5" cy="5" rx="12" ry="4"/><path d="M1.5 5 V24 Q1.5 28 13.5 28 Q25.5 28 25.5 24 V5"/><path d="M1.5 11.5 Q1.5 15.5 13.5 15.5 Q25.5 15.5 25.5 11.5 M1.5 18 Q1.5 22 13.5 22 Q25.5 22 25.5 18"/></g></svg>
<div class="t" style="left:165px;top:1384px;font-size:12.1px;color:#333">IWP - PREZENTACJA</div>
<svg style="left:300.5px;top:1374px" width="31" height="29"><g fill="none" stroke="#3a8fc7" stroke-width="1.5"><circle cx="15.5" cy="14.5" r="13.8"/><path d="M6.5 25 Q7 19 12.5 17.5 Q9 14.5 10 9.5 Q11.5 4.5 15.5 4.5 Q19.5 4.5 21 9.5 Q22 14.5 18.5 17.5 Q24 19 24.5 25"/></g></svg>
<div class="t" style="left:336px;top:1382.5px;font-size:14px;color:#3a8fc7">Użytkownik IWP [Administrator]</div>
<svg style="left:569px;top:1374px" width="28" height="28"><g fill="none" stroke="#454545" stroke-width="1.5"><rect x="0.8" y="0.8" width="26" height="26" rx="2.5"/><path d="M12 6 Q7 9 8.5 14.5 Q10 19 16 18.5 M13.5 15.5 L16.5 18.5 L13.5 21.5 M16 18.5 V23"/></g></svg>
<div class="t" style="left:606px;top:1382.5px;font-size:13.4px;color:#333">Październik 2019 r.</div>
<div class="t" style="left:2290px;top:1382.5px;font-size:13.2px;color:#3a3a3a">wer. <b>7.2</b>.349.48</div>
<div class="t" style="left:2400px;top:1382.5px;font-size:13.2px;color:#3a3a3a">lic. 89</div>
</body></html>
